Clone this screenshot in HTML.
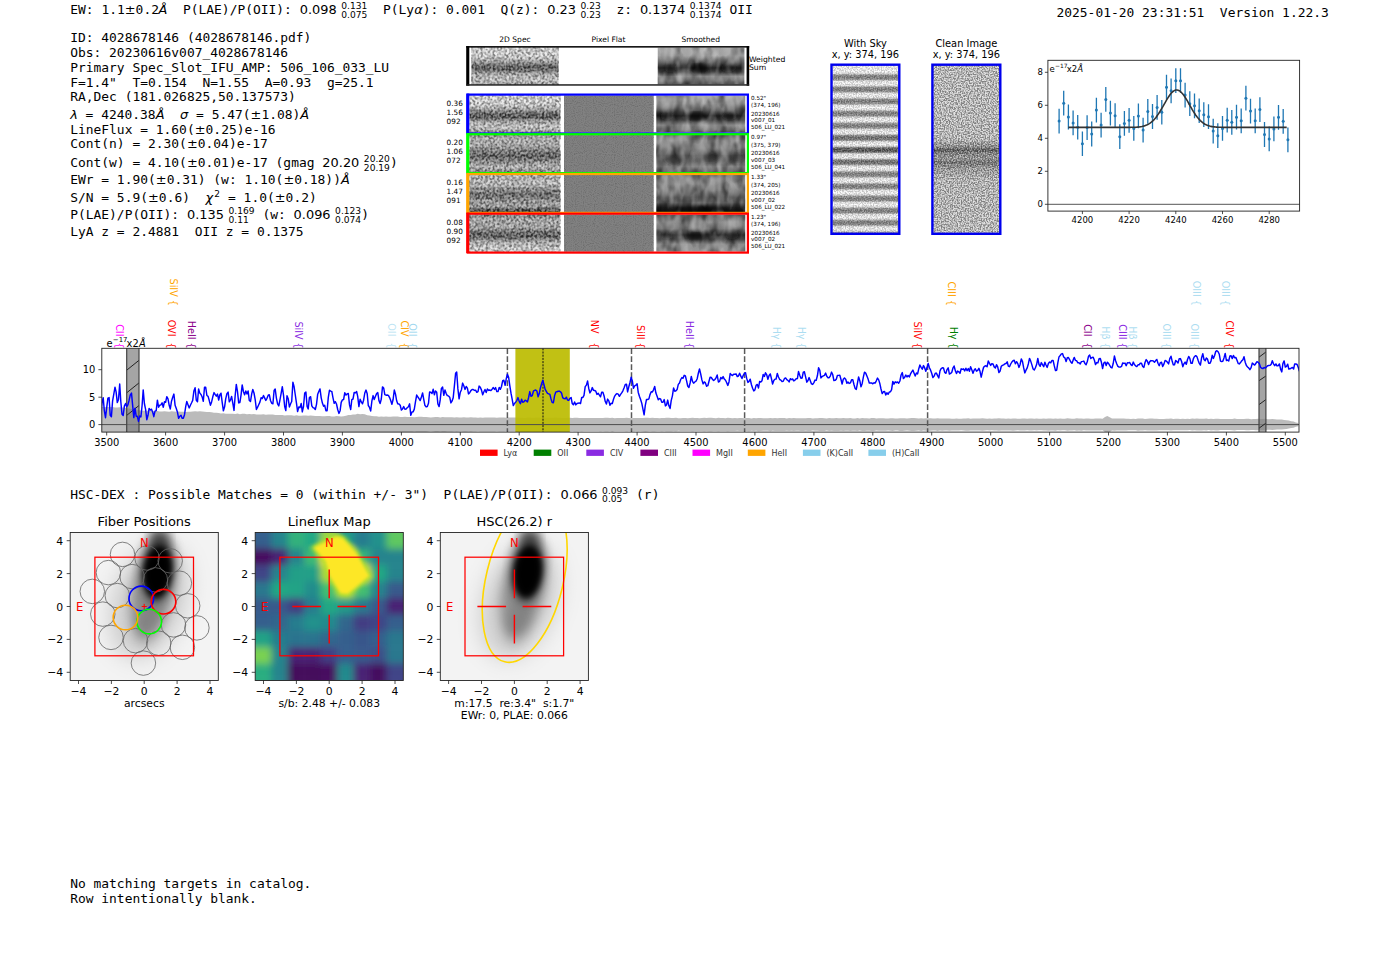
<!DOCTYPE html>
<html><head><meta charset="utf-8"><title>HETDEX detection 4028678146</title>
<style>
html,body{margin:0;padding:0;background:#fff;}
svg{display:block}
text{white-space:pre}
.m{font-family:"DejaVu Sans Mono","Liberation Mono",monospace;font-size:12.93px}
.s{font-family:"DejaVu Sans","Liberation Sans",sans-serif}
</style></head><body>
<svg width="1400" height="953" viewBox="0 0 1400 953">
<defs>
<filter id="nz" x="0" y="0" width="100%" height="100%" color-interpolation-filters="sRGB">
  <feTurbulence type="fractalNoise" baseFrequency="0.42 0.4" numOctaves="1" seed="7" result="t"/>
  <feColorMatrix in="t" type="matrix" values="0 0 0 0 0  0 0 0 0 0  0 0 0 0 0  2.6 2.6 0 0 -2.1"/>
</filter>
<filter id="nzw" x="0" y="0" width="100%" height="100%" color-interpolation-filters="sRGB">
  <feTurbulence type="fractalNoise" baseFrequency="0.45 0.42" numOctaves="1" seed="11" result="t"/>
  <feColorMatrix in="t" type="matrix" values="0 0 0 0 1  0 0 0 0 1  0 0 0 0 1  2.6 2.6 0 0 -2.1"/>
</filter>
<filter id="nzf" x="0" y="0" width="100%" height="100%" color-interpolation-filters="sRGB">
  <feTurbulence type="fractalNoise" baseFrequency="0.9" numOctaves="1" seed="3" result="t"/>
  <feColorMatrix in="t" type="matrix" values="0 0 0 0 0  0 0 0 0 0  0 0 0 0 0  0.3 0.3 0 0 -0.27"/>
</filter>
<filter id="nzs" x="0" y="0" width="100%" height="100%" color-interpolation-filters="sRGB">
  <feTurbulence type="fractalNoise" baseFrequency="0.11 0.07" numOctaves="2" seed="5" result="t"/>
  <feColorMatrix in="t" type="matrix" values="0 0 0 0 0  0 0 0 0 0  0 0 0 0 0  2.4 0 0 0 -0.95"/>
</filter>
<filter id="nzsw" x="0" y="0" width="100%" height="100%" color-interpolation-filters="sRGB">
  <feTurbulence type="fractalNoise" baseFrequency="0.12 0.06" numOctaves="2" seed="23" result="t"/>
  <feColorMatrix in="t" type="matrix" values="0 0 0 0 1  0 0 0 0 1  0 0 0 0 1  0 2.4 0 0 -1.1"/>
</filter>
<filter id="nf" x="0" y="0" width="100%" height="100%" color-interpolation-filters="sRGB">
  <feTurbulence type="fractalNoise" baseFrequency="0.75 0.7" numOctaves="1" seed="17" result="t"/>
  <feColorMatrix in="t" type="matrix" values="0 0 0 0 0  0 0 0 0 0  0 0 0 0 0  3 3 0 0 -2.55"/>
</filter>
<filter id="nfw" x="0" y="0" width="100%" height="100%" color-interpolation-filters="sRGB">
  <feTurbulence type="fractalNoise" baseFrequency="0.7 0.75" numOctaves="1" seed="29" result="t"/>
  <feColorMatrix in="t" type="matrix" values="0 0 0 0 1  0 0 0 0 1  0 0 0 0 1  3 3 0 0 -2.55"/>
</filter>
<filter id="b1" x="-10%" y="-10%" width="120%" height="120%"><feGaussianBlur stdDeviation="1.6"/></filter>
<filter id="b2" x="-10%" y="-10%" width="120%" height="120%"><feGaussianBlur stdDeviation="2.4 1.8"/></filter>
<linearGradient id="gs0" x1="0" y1="0" x2="0" y2="1"><stop offset="0.000" stop-color="#ebebeb"/><stop offset="0.250" stop-color="#e1e1e1"/><stop offset="0.380" stop-color="#aaaaaa"/><stop offset="0.500" stop-color="#4b4b4b"/><stop offset="0.600" stop-color="#505050"/><stop offset="0.700" stop-color="#aaaaaa"/><stop offset="0.850" stop-color="#d7d7d7"/><stop offset="0.950" stop-color="#bebebe"/><stop offset="1.000" stop-color="#969696"/></linearGradient><linearGradient id="gm0" x1="0" y1="0" x2="0" y2="1"><stop offset="0.000" stop-color="#a5a5a5"/><stop offset="0.220" stop-color="#a0a0a0"/><stop offset="0.400" stop-color="#646464"/><stop offset="0.550" stop-color="#232323"/><stop offset="0.660" stop-color="#3c3c3c"/><stop offset="0.780" stop-color="#878787"/><stop offset="0.900" stop-color="#737373"/><stop offset="1.000" stop-color="#555555"/></linearGradient><clipPath id="cs0"><rect x="657.5" y="47.5" width="87.10" height="37.10"/></clipPath><linearGradient id="gs1" x1="0" y1="0" x2="0" y2="1"><stop offset="0.000" stop-color="#ebebeb"/><stop offset="0.250" stop-color="#e1e1e1"/><stop offset="0.380" stop-color="#aaaaaa"/><stop offset="0.500" stop-color="#464646"/><stop offset="0.600" stop-color="#4b4b4b"/><stop offset="0.700" stop-color="#aaaaaa"/><stop offset="0.850" stop-color="#d7d7d7"/><stop offset="0.950" stop-color="#b4b4b4"/><stop offset="1.000" stop-color="#8c8c8c"/></linearGradient><linearGradient id="gm1" x1="0" y1="0" x2="0" y2="1"><stop offset="0.000" stop-color="#a0a0a0"/><stop offset="0.220" stop-color="#9b9b9b"/><stop offset="0.400" stop-color="#646464"/><stop offset="0.550" stop-color="#232323"/><stop offset="0.660" stop-color="#3c3c3c"/><stop offset="0.800" stop-color="#878787"/><stop offset="0.920" stop-color="#787878"/><stop offset="1.000" stop-color="#5f5f5f"/></linearGradient><clipPath id="cs1"><rect x="656.2" y="95.39999999999999" width="89.20" height="37.20"/></clipPath><linearGradient id="gs2" x1="0" y1="0" x2="0" y2="1"><stop offset="0.000" stop-color="#969696"/><stop offset="0.120" stop-color="#bebebe"/><stop offset="0.300" stop-color="#aaaaaa"/><stop offset="0.450" stop-color="#6e6e6e"/><stop offset="0.580" stop-color="#464646"/><stop offset="0.700" stop-color="#828282"/><stop offset="0.850" stop-color="#c8c8c8"/><stop offset="0.950" stop-color="#969696"/><stop offset="1.000" stop-color="#828282"/></linearGradient><linearGradient id="gm2" x1="0" y1="0" x2="0" y2="1"><stop offset="0.000" stop-color="#6e6e6e"/><stop offset="0.150" stop-color="#8c8c8c"/><stop offset="0.350" stop-color="#7d7d7d"/><stop offset="0.550" stop-color="#464646"/><stop offset="0.700" stop-color="#5a5a5a"/><stop offset="0.850" stop-color="#878787"/><stop offset="1.000" stop-color="#6e6e6e"/></linearGradient><clipPath id="cs2"><rect x="656.2" y="135.0" width="89.20" height="37.20"/></clipPath><linearGradient id="gs3" x1="0" y1="0" x2="0" y2="1"><stop offset="0.000" stop-color="#bebebe"/><stop offset="0.250" stop-color="#c8c8c8"/><stop offset="0.420" stop-color="#828282"/><stop offset="0.550" stop-color="#5a5a5a"/><stop offset="0.700" stop-color="#969696"/><stop offset="0.850" stop-color="#aaaaaa"/><stop offset="0.930" stop-color="#3c3c3c"/><stop offset="1.000" stop-color="#282828"/></linearGradient><linearGradient id="gm3" x1="0" y1="0" x2="0" y2="1"><stop offset="0.000" stop-color="#878787"/><stop offset="0.250" stop-color="#8c8c8c"/><stop offset="0.450" stop-color="#6e6e6e"/><stop offset="0.600" stop-color="#555555"/><stop offset="0.750" stop-color="#646464"/><stop offset="0.880" stop-color="#282828"/><stop offset="1.000" stop-color="#0f0f0f"/></linearGradient><clipPath id="cs3"><rect x="656.2" y="174.8" width="89.20" height="37.20"/></clipPath><linearGradient id="gs4" x1="0" y1="0" x2="0" y2="1"><stop offset="0.000" stop-color="#787878"/><stop offset="0.150" stop-color="#b4b4b4"/><stop offset="0.350" stop-color="#aaaaaa"/><stop offset="0.500" stop-color="#505050"/><stop offset="0.600" stop-color="#4b4b4b"/><stop offset="0.720" stop-color="#aaaaaa"/><stop offset="0.900" stop-color="#e1e1e1"/><stop offset="1.000" stop-color="#d7d7d7"/></linearGradient><linearGradient id="gm4" x1="0" y1="0" x2="0" y2="1"><stop offset="0.000" stop-color="#5f5f5f"/><stop offset="0.200" stop-color="#8c8c8c"/><stop offset="0.380" stop-color="#787878"/><stop offset="0.550" stop-color="#2d2d2d"/><stop offset="0.660" stop-color="#414141"/><stop offset="0.800" stop-color="#8c8c8c"/><stop offset="1.000" stop-color="#969696"/></linearGradient><clipPath id="cs4"><rect x="656.2" y="214.5" width="89.20" height="37.20"/></clipPath><linearGradient id="gsky" x1="0" y1="0" x2="0" y2="1"><stop offset="0.000" stop-color="#f5f5f5"/><stop offset="0.034" stop-color="#fcfcfc"/><stop offset="0.047" stop-color="#ebebeb"/><stop offset="0.058" stop-color="#8a8a8a"/><stop offset="0.070" stop-color="#767676"/><stop offset="0.082" stop-color="#8a8a8a"/><stop offset="0.093" stop-color="#ebebeb"/><stop offset="0.106" stop-color="#fcfcfc"/><stop offset="0.119" stop-color="#ebebeb"/><stop offset="0.131" stop-color="#8a8a8a"/><stop offset="0.142" stop-color="#767676"/><stop offset="0.154" stop-color="#8a8a8a"/><stop offset="0.166" stop-color="#ebebeb"/><stop offset="0.179" stop-color="#fcfcfc"/><stop offset="0.191" stop-color="#ebebeb"/><stop offset="0.203" stop-color="#8a8a8a"/><stop offset="0.215" stop-color="#767676"/><stop offset="0.226" stop-color="#8a8a8a"/><stop offset="0.238" stop-color="#ebebeb"/><stop offset="0.251" stop-color="#fcfcfc"/><stop offset="0.264" stop-color="#ebebeb"/><stop offset="0.276" stop-color="#8a8a8a"/><stop offset="0.287" stop-color="#767676"/><stop offset="0.299" stop-color="#8a8a8a"/><stop offset="0.311" stop-color="#ebebeb"/><stop offset="0.323" stop-color="#fcfcfc"/><stop offset="0.336" stop-color="#ebebeb"/><stop offset="0.348" stop-color="#8a8a8a"/><stop offset="0.360" stop-color="#767676"/><stop offset="0.371" stop-color="#8a8a8a"/><stop offset="0.383" stop-color="#ebebeb"/><stop offset="0.396" stop-color="#fcfcfc"/><stop offset="0.409" stop-color="#ebebeb"/><stop offset="0.420" stop-color="#787878"/><stop offset="0.432" stop-color="#646464"/><stop offset="0.444" stop-color="#787878"/><stop offset="0.455" stop-color="#ebebeb"/><stop offset="0.468" stop-color="#fcfcfc"/><stop offset="0.481" stop-color="#ebebeb"/><stop offset="0.493" stop-color="#5a5a5a"/><stop offset="0.504" stop-color="#464646"/><stop offset="0.516" stop-color="#5a5a5a"/><stop offset="0.528" stop-color="#ebebeb"/><stop offset="0.541" stop-color="#fcfcfc"/><stop offset="0.554" stop-color="#ebebeb"/><stop offset="0.565" stop-color="#787878"/><stop offset="0.577" stop-color="#646464"/><stop offset="0.589" stop-color="#787878"/><stop offset="0.600" stop-color="#ebebeb"/><stop offset="0.613" stop-color="#fcfcfc"/><stop offset="0.626" stop-color="#ebebeb"/><stop offset="0.638" stop-color="#8a8a8a"/><stop offset="0.649" stop-color="#767676"/><stop offset="0.661" stop-color="#8a8a8a"/><stop offset="0.673" stop-color="#ebebeb"/><stop offset="0.686" stop-color="#fcfcfc"/><stop offset="0.698" stop-color="#ebebeb"/><stop offset="0.710" stop-color="#8a8a8a"/><stop offset="0.722" stop-color="#767676"/><stop offset="0.733" stop-color="#8a8a8a"/><stop offset="0.745" stop-color="#ebebeb"/><stop offset="0.758" stop-color="#fcfcfc"/><stop offset="0.771" stop-color="#ebebeb"/><stop offset="0.783" stop-color="#8a8a8a"/><stop offset="0.794" stop-color="#767676"/><stop offset="0.806" stop-color="#8a8a8a"/><stop offset="0.817" stop-color="#ebebeb"/><stop offset="0.830" stop-color="#fcfcfc"/><stop offset="0.843" stop-color="#ebebeb"/><stop offset="0.855" stop-color="#8a8a8a"/><stop offset="0.867" stop-color="#767676"/><stop offset="0.878" stop-color="#8a8a8a"/><stop offset="0.890" stop-color="#ebebeb"/><stop offset="0.903" stop-color="#fcfcfc"/><stop offset="0.916" stop-color="#ebebeb"/><stop offset="0.927" stop-color="#8a8a8a"/><stop offset="0.939" stop-color="#767676"/><stop offset="0.951" stop-color="#8a8a8a"/><stop offset="0.962" stop-color="#ebebeb"/><stop offset="0.975" stop-color="#fcfcfc"/><stop offset="0.988" stop-color="#ebebeb"/><stop offset="1.000" stop-color="#8a8a8a"/><stop offset="1.000" stop-color="#767676"/><stop offset="1.000" stop-color="#8a8a8a"/><stop offset="1.000" stop-color="#ebebeb"/></linearGradient><linearGradient id="gcl" x1="0" y1="0" x2="0" y2="1"><stop offset="0.000" stop-color="#d4d4d4"/><stop offset="0.440" stop-color="#d2d2d2"/><stop offset="0.485" stop-color="#969696"/><stop offset="0.505" stop-color="#555555"/><stop offset="0.525" stop-color="#8c8c8c"/><stop offset="0.555" stop-color="#a0a0a0"/><stop offset="0.580" stop-color="#737373"/><stop offset="0.610" stop-color="#a5a5a5"/><stop offset="0.680" stop-color="#cdcdcd"/><stop offset="1.000" stop-color="#d4d4d4"/></linearGradient><clipPath id="cm"><rect x="101.8" y="348.3" width="1197.2" height="83.8"/></clipPath><filter id="gb" x="-30%" y="-30%" width="160%" height="160%"><feGaussianBlur stdDeviation="5.5"/></filter><filter id="gb2" x="-30%" y="-30%" width="160%" height="160%"><feGaussianBlur stdDeviation="11"/></filter><filter id="gb3" x="-30%" y="-30%" width="160%" height="160%"><feGaussianBlur stdDeviation="3.2"/></filter><filter id="vb" x="-30%" y="-30%" width="160%" height="160%"><feGaussianBlur stdDeviation="3.6"/></filter><clipPath id="cg1"><rect x="70.2" y="532.5" width="148.1" height="148"/></clipPath><clipPath id="cv"><rect x="255.2" y="532.5" width="148.1" height="148"/></clipPath><clipPath id="cg3"><rect x="440.3" y="532.5" width="148.1" height="148"/></clipPath></defs>
<rect width="1400" height="953" fill="#fff"/>
<text class="m" x="70.30" y="13.90" >EW: 1.1</text>
<text class="s" x="124.79" y="13.90" font-size="12.93" >±</text>
<text class="m" x="135.62" y="13.90" >0.2</text>
<text class="s" x="158.57" y="13.90" font-size="12.93" font-style="italic" >Å</text>
<text class="m" x="167.42" y="13.90" >  P(LAE)/P(OII): </text>
<text class="s" x="299.75" y="13.90" font-size="12.93" >0.098</text>
<text class="s" x="341.26" y="8.90" font-size="9.1" >0.131</text>
<text class="s" x="341.26" y="17.50" font-size="9.1" >0.075</text>
<text class="m" x="367.47" y="13.90" >  P(Ly</text>
<text class="s" x="414.18" y="13.90" font-size="12.93" font-style="italic" >α</text>
<text class="m" x="422.70" y="13.90" >): 0.001  Q(z): </text>
<text class="s" x="547.24" y="13.90" font-size="12.93" >0.23</text>
<text class="s" x="580.53" y="8.90" font-size="9.1" >0.23</text>
<text class="s" x="580.53" y="17.50" font-size="9.1" >0.23</text>
<text class="m" x="600.98" y="13.90" >  z: </text>
<text class="s" x="639.90" y="13.90" font-size="12.93" >0.1374</text>
<text class="s" x="689.65" y="8.90" font-size="9.1" >0.1374</text>
<text class="s" x="689.65" y="17.50" font-size="9.1" >0.1374</text>
<text class="m" x="721.61" y="13.90" > OII</text>
<text class="m" x="1056.50" y="16.50" >2025-01-20 23:31:51  Version 1.22.3</text>
<text class="m" x="70.20" y="42.40" >ID: 4028678146 (4028678146.pdf)</text>
<text class="m" x="70.20" y="57.00" >Obs: 20230616v007_4028678146</text>
<text class="m" x="70.20" y="71.80" >Primary Spec_Slot_IFU_AMP: 506_106_033_LU</text>
<text class="m" x="70.20" y="86.60" >F=1.4"  T=0.154  N=1.55  A=0.93  g=25.1</text>
<text class="m" x="70.20" y="101.30" >RA,Dec (181.026825,50.137573)</text>
<text class="s" x="70.20" y="118.60" font-size="12.93" font-style="italic" >λ</text>
<text class="m" x="77.85" y="118.60" > = 4240.38</text>
<text class="s" x="155.69" y="118.60" font-size="12.93" font-style="italic" >Å</text>
<text class="m" x="164.54" y="118.60" >  </text>
<text class="s" x="180.11" y="118.60" font-size="12.93" font-style="italic" >σ</text>
<text class="m" x="188.30" y="118.60" > = 5.47(</text>
<text class="s" x="250.57" y="118.60" font-size="12.93" >±</text>
<text class="m" x="261.41" y="118.60" >1.08)</text>
<text class="s" x="300.33" y="118.60" font-size="12.93" font-style="italic" >Å</text>
<text class="m" x="70.20" y="133.80" >LineFlux = 1.60(</text>
<text class="s" x="194.74" y="133.80" font-size="12.93" >±</text>
<text class="m" x="205.58" y="133.80" >0.25)e-16</text>
<text class="m" x="70.20" y="148.30" >Cont(n) = 2.30(</text>
<text class="s" x="186.96" y="148.30" font-size="12.93" >±</text>
<text class="m" x="197.79" y="148.30" >0.04)e-17</text>
<text class="m" x="70.20" y="167.00" >Cont(w) = 4.10(</text>
<text class="s" x="186.96" y="167.00" font-size="12.93" >±</text>
<text class="m" x="197.79" y="167.00" >0.01)e-17 (gmag </text>
<text class="s" x="322.34" y="167.00" font-size="12.93" >20.20</text>
<text class="s" x="363.85" y="162.00" font-size="9.1" >20.20</text>
<text class="s" x="363.85" y="170.60" font-size="9.1" >20.19</text>
<text class="m" x="390.06" y="167.00" >)</text>
<text class="m" x="70.20" y="184.30" >EWr = 1.90(</text>
<text class="s" x="155.82" y="184.30" font-size="12.93" >±</text>
<text class="m" x="166.66" y="184.30" >0.31) (w: 1.10(</text>
<text class="s" x="283.42" y="184.30" font-size="12.93" >±</text>
<text class="m" x="294.25" y="184.30" >0.18))</text>
<text class="s" x="340.96" y="184.30" font-size="12.93" font-style="italic" >Å</text>
<text class="m" x="70.20" y="202.00" >S/N = 5.9(</text>
<text class="s" x="148.04" y="202.00" font-size="12.93" >±</text>
<text class="m" x="158.87" y="202.00" >0.6)  </text>
<text class="s" x="205.58" y="202.00" font-size="12.93" font-style="italic" >χ</text>
<text class="s" x="214.13" y="196.80" font-size="9.05" >2</text>
<text class="m" x="220.29" y="202.00" > = 1.0(</text>
<text class="s" x="274.78" y="202.00" font-size="12.93" >±</text>
<text class="m" x="285.61" y="202.00" >0.2)</text>
<text class="m" x="70.20" y="219.30" >P(LAE)/P(OII): </text>
<text class="s" x="186.96" y="219.30" font-size="12.93" >0.135</text>
<text class="s" x="228.48" y="214.30" font-size="9.1" >0.169</text>
<text class="s" x="228.48" y="222.90" font-size="9.1" >0.11</text>
<text class="m" x="254.68" y="219.30" > (w: </text>
<text class="s" x="293.60" y="219.30" font-size="12.93" >0.096</text>
<text class="s" x="335.12" y="214.30" font-size="9.1" >0.123</text>
<text class="s" x="335.12" y="222.90" font-size="9.1" >0.074</text>
<text class="m" x="361.33" y="219.30" >)</text>
<text class="m" x="70.20" y="236.30" >LyA z = 2.4881  OII z = 0.1375</text>
<rect x="471.5" y="47.5" width="87.00" height="37.10" fill="url(#gs0)"/>
<rect x="471.5" y="47.5" width="87.00" height="37.10" filter="url(#nz)" opacity="0.45"/>
<rect x="471.5" y="47.5" width="87.00" height="37.10" filter="url(#nzw)" opacity="0.4"/>
<g clip-path="url(#cs0)">
<rect x="657.5" y="47.5" width="87.10" height="37.10" fill="url(#gm0)"/>
<rect x="657.5" y="47.5" width="87.10" height="37.10" filter="url(#nzs)" opacity="0.5"/>
<rect x="657.5" y="47.5" width="87.10" height="37.10" filter="url(#nzsw)" opacity="0.35"/>
<g filter="url(#b2)">
<ellipse cx="668.0" cy="54.9" rx="7.0" ry="7.4" fill="#bebebe" opacity="0.44"/>
<ellipse cx="696.7" cy="53.1" rx="8.7" ry="7.4" fill="#bebebe" opacity="0.39"/>
<ellipse cx="731.5" cy="54.9" rx="7.0" ry="9.3" fill="#bebebe" opacity="0.44"/>
<ellipse cx="699.3" cy="67.9" rx="7.8" ry="5.2" fill="#000000" opacity="0.68"/>
<ellipse cx="670.6" cy="67.9" rx="6.1" ry="4.5" fill="#141414" opacity="0.48"/>
<ellipse cx="728.9" cy="67.9" rx="7.0" ry="4.5" fill="#141414" opacity="0.48"/>
<ellipse cx="683.6" cy="77.2" rx="7.0" ry="4.5" fill="#bebebe" opacity="0.33"/>
<ellipse cx="714.1" cy="76.4" rx="5.2" ry="4.5" fill="#bebebe" opacity="0.28"/>
</g></g>
<rect x="466.2" y="46.1" width="3.1" height="39.6" fill="#000"/>
<rect x="746.6" y="46.1" width="2.6" height="39.6" fill="#000"/>
<rect x="466.2" y="46.1" width="283.00000000000006" height="1.5" fill="#000"/>
<rect x="466.2" y="84.2" width="283.00000000000006" height="1.5" fill="#222"/>
<rect x="469.4" y="95.39999999999999" width="90.80" height="37.20" fill="url(#gs1)"/>
<rect x="469.4" y="95.39999999999999" width="90.80" height="37.20" filter="url(#nz)" opacity="0.45"/>
<rect x="469.4" y="95.39999999999999" width="90.80" height="37.20" filter="url(#nzw)" opacity="0.4"/>
<rect x="564" y="95.4" width="89.7" height="37.2" fill="#818181"/>
<rect x="564" y="95.4" width="89.7" height="37.2" filter="url(#nzf)"/>
<g clip-path="url(#cs1)">
<rect x="656.2" y="95.39999999999999" width="89.20" height="37.20" fill="url(#gm1)"/>
<rect x="656.2" y="95.39999999999999" width="89.20" height="37.20" filter="url(#nzs)" opacity="0.5"/>
<rect x="656.2" y="95.39999999999999" width="89.20" height="37.20" filter="url(#nzsw)" opacity="0.35"/>
<g filter="url(#b2)">
<ellipse cx="666.9" cy="102.8" rx="7.1" ry="7.4" fill="#bebebe" opacity="0.44"/>
<ellipse cx="696.3" cy="101.0" rx="8.9" ry="7.4" fill="#bebebe" opacity="0.39"/>
<ellipse cx="732.0" cy="102.8" rx="7.1" ry="9.3" fill="#bebebe" opacity="0.44"/>
<ellipse cx="696.3" cy="115.9" rx="8.0" ry="5.2" fill="#000000" opacity="0.64"/>
<ellipse cx="666.9" cy="115.9" rx="6.2" ry="4.5" fill="#141414" opacity="0.48"/>
<ellipse cx="729.3" cy="115.9" rx="7.1" ry="4.5" fill="#141414" opacity="0.48"/>
<ellipse cx="683.0" cy="127.0" rx="6.2" ry="5.6" fill="#bebebe" opacity="0.33"/>
<ellipse cx="711.5" cy="127.0" rx="5.4" ry="5.6" fill="#bebebe" opacity="0.28"/>
</g></g>
<rect x="469.4" y="135.0" width="90.80" height="37.20" fill="url(#gs2)"/>
<rect x="469.4" y="135.0" width="90.80" height="37.20" filter="url(#nz)" opacity="0.45"/>
<rect x="469.4" y="135.0" width="90.80" height="37.20" filter="url(#nzw)" opacity="0.4"/>
<rect x="564" y="135.0" width="89.7" height="37.2" fill="#818181"/>
<rect x="564" y="135.0" width="89.7" height="37.2" filter="url(#nzf)"/>
<g clip-path="url(#cs2)">
<rect x="656.2" y="135.0" width="89.20" height="37.20" fill="url(#gm2)"/>
<rect x="656.2" y="135.0" width="89.20" height="37.20" filter="url(#nzs)" opacity="0.5"/>
<rect x="656.2" y="135.0" width="89.20" height="37.20" filter="url(#nzsw)" opacity="0.35"/>
<g filter="url(#b2)">
<ellipse cx="666.9" cy="146.2" rx="4.5" ry="11.2" fill="#bebebe" opacity="0.39"/>
<ellipse cx="683.0" cy="146.2" rx="4.5" ry="13.0" fill="#bebebe" opacity="0.39"/>
<ellipse cx="700.8" cy="148.0" rx="4.5" ry="11.2" fill="#bebebe" opacity="0.39"/>
<ellipse cx="725.8" cy="146.2" rx="5.4" ry="11.2" fill="#bebebe" opacity="0.39"/>
<ellipse cx="691.9" cy="144.3" rx="1.8" ry="9.3" fill="#282828" opacity="0.56"/>
<ellipse cx="674.0" cy="159.2" rx="8.9" ry="5.6" fill="#1e1e1e" opacity="0.48"/>
<ellipse cx="709.7" cy="157.3" rx="8.9" ry="4.5" fill="#282828" opacity="0.48"/>
<ellipse cx="736.5" cy="157.3" rx="5.4" ry="5.6" fill="#282828" opacity="0.48"/>
</g></g>
<rect x="469.4" y="174.8" width="90.80" height="37.20" fill="url(#gs3)"/>
<rect x="469.4" y="174.8" width="90.80" height="37.20" filter="url(#nz)" opacity="0.45"/>
<rect x="469.4" y="174.8" width="90.80" height="37.20" filter="url(#nzw)" opacity="0.4"/>
<rect x="564" y="174.8" width="89.7" height="37.2" fill="#818181"/>
<rect x="564" y="174.8" width="89.7" height="37.2" filter="url(#nzf)"/>
<g clip-path="url(#cs3)">
<rect x="656.2" y="174.8" width="89.20" height="37.20" fill="url(#gm3)"/>
<rect x="656.2" y="174.8" width="89.20" height="37.20" filter="url(#nzs)" opacity="0.5"/>
<rect x="656.2" y="174.8" width="89.20" height="37.20" filter="url(#nzsw)" opacity="0.35"/>
<g filter="url(#b2)">
<ellipse cx="665.1" cy="186.0" rx="4.5" ry="11.2" fill="#bebebe" opacity="0.33"/>
<ellipse cx="687.4" cy="186.0" rx="5.4" ry="11.2" fill="#bebebe" opacity="0.33"/>
<ellipse cx="711.5" cy="184.1" rx="5.4" ry="9.3" fill="#bebebe" opacity="0.33"/>
<ellipse cx="734.7" cy="186.0" rx="4.5" ry="11.2" fill="#bebebe" opacity="0.33"/>
<ellipse cx="700.8" cy="209.0" rx="26.8" ry="3.0" fill="#000000" opacity="0.56"/>
</g></g>
<rect x="469.4" y="214.5" width="90.80" height="37.20" fill="url(#gs4)"/>
<rect x="469.4" y="214.5" width="90.80" height="37.20" filter="url(#nz)" opacity="0.45"/>
<rect x="469.4" y="214.5" width="90.80" height="37.20" filter="url(#nzw)" opacity="0.4"/>
<rect x="564" y="214.5" width="89.7" height="37.2" fill="#818181"/>
<rect x="564" y="214.5" width="89.7" height="37.2" filter="url(#nzf)"/>
<g clip-path="url(#cs4)">
<rect x="656.2" y="214.5" width="89.20" height="37.20" fill="url(#gm4)"/>
<rect x="656.2" y="214.5" width="89.20" height="37.20" filter="url(#nzs)" opacity="0.5"/>
<rect x="656.2" y="214.5" width="89.20" height="37.20" filter="url(#nzsw)" opacity="0.35"/>
<g filter="url(#b2)">
<ellipse cx="669.6" cy="225.7" rx="6.2" ry="5.6" fill="#bebebe" opacity="0.39"/>
<ellipse cx="696.3" cy="223.8" rx="7.1" ry="5.6" fill="#bebebe" opacity="0.39"/>
<ellipse cx="729.3" cy="224.9" rx="6.2" ry="5.6" fill="#bebebe" opacity="0.39"/>
<ellipse cx="696.3" cy="235.7" rx="8.9" ry="4.5" fill="#000000" opacity="0.60"/>
<ellipse cx="732.0" cy="235.7" rx="6.2" ry="3.7" fill="#141414" opacity="0.48"/>
<ellipse cx="666.9" cy="235.7" rx="5.4" ry="3.7" fill="#1e1e1e" opacity="0.40"/>
<ellipse cx="683.0" cy="246.1" rx="7.1" ry="4.5" fill="#bebebe" opacity="0.33"/>
<ellipse cx="718.6" cy="246.1" rx="7.1" ry="4.5" fill="#bebebe" opacity="0.33"/>
</g></g>
<rect x="467.7" y="94.6" width="280.20000000000005" height="38.9" fill="none" stroke="#0000ff" stroke-width="2.2"/>
<rect x="466.2" y="93.6" width="3.1" height="40.3" fill="#0000ff"/>
<rect x="467.7" y="134.2" width="280.20000000000005" height="38.9" fill="none" stroke="#00ff00" stroke-width="2.2"/>
<rect x="466.2" y="133.2" width="3.1" height="40.3" fill="#00ff00"/>
<rect x="467.7" y="174.0" width="280.20000000000005" height="38.9" fill="none" stroke="#ffa500" stroke-width="2.2"/>
<rect x="466.2" y="173.0" width="3.1" height="40.3" fill="#ffa500"/>
<rect x="467.7" y="213.7" width="280.20000000000005" height="38.9" fill="none" stroke="#ff0000" stroke-width="2.2"/>
<rect x="466.2" y="212.7" width="3.1" height="40.3" fill="#ff0000"/>
<text class="s" x="515.00" y="41.60" font-size="7.55" text-anchor="middle" >2D Spec</text>
<text class="s" x="608.50" y="41.60" font-size="7.55" text-anchor="middle" >Pixel Flat</text>
<text class="s" x="700.70" y="41.60" font-size="7.55" text-anchor="middle" >Smoothed</text>
<text class="s" x="748.90" y="61.60" font-size="7.7" >Weighted</text>
<text class="s" x="748.90" y="69.90" font-size="7.7" >Sum</text>
<text class="s" x="446.60" y="105.70" font-size="7.3" >0.36</text>
<text class="s" x="446.60" y="114.60" font-size="7.3" >1.56</text>
<text class="s" x="446.60" y="123.50" font-size="7.3" >092</text>
<text class="s" x="446.60" y="145.30" font-size="7.3" >0.20</text>
<text class="s" x="446.60" y="154.20" font-size="7.3" >1.06</text>
<text class="s" x="446.60" y="163.10" font-size="7.3" >072</text>
<text class="s" x="446.60" y="185.10" font-size="7.3" >0.16</text>
<text class="s" x="446.60" y="194.00" font-size="7.3" >1.47</text>
<text class="s" x="446.60" y="202.90" font-size="7.3" >091</text>
<text class="s" x="446.60" y="224.80" font-size="7.3" >0.08</text>
<text class="s" x="446.60" y="233.70" font-size="7.3" >0.90</text>
<text class="s" x="446.60" y="242.60" font-size="7.3" >092</text>
<text class="s" x="751.00" y="99.60" font-size="5.65" >0.52"</text>
<text class="s" x="751.00" y="107.20" font-size="5.65" >(374, 196)</text>
<text class="s" x="751.00" y="115.50" font-size="5.65" >20230616</text>
<text class="s" x="751.00" y="122.20" font-size="5.65" >v007_01</text>
<text class="s" x="751.00" y="129.20" font-size="5.65" >506_LU_021</text>
<text class="s" x="751.00" y="139.20" font-size="5.65" >0.97"</text>
<text class="s" x="751.00" y="146.80" font-size="5.65" >(375, 379)</text>
<text class="s" x="751.00" y="155.10" font-size="5.65" >20230616</text>
<text class="s" x="751.00" y="161.80" font-size="5.65" >v007_03</text>
<text class="s" x="751.00" y="168.80" font-size="5.65" >506_LU_041</text>
<text class="s" x="751.00" y="179.00" font-size="5.65" >1.33"</text>
<text class="s" x="751.00" y="186.60" font-size="5.65" >(374, 205)</text>
<text class="s" x="751.00" y="194.90" font-size="5.65" >20230616</text>
<text class="s" x="751.00" y="201.60" font-size="5.65" >v007_02</text>
<text class="s" x="751.00" y="208.60" font-size="5.65" >506_LU_022</text>
<text class="s" x="751.00" y="218.70" font-size="5.65" >1.23"</text>
<text class="s" x="751.00" y="226.30" font-size="5.65" >(374, 196)</text>
<text class="s" x="751.00" y="234.60" font-size="5.65" >20230616</text>
<text class="s" x="751.00" y="241.30" font-size="5.65" >v007_02</text>
<text class="s" x="751.00" y="248.30" font-size="5.65" >506_LU_021</text>
<text class="s" x="865.40" y="47.40" font-size="9.85" text-anchor="middle" >With Sky</text>
<text class="s" x="865.40" y="58.40" font-size="9.85" text-anchor="middle" >x, y: 374, 196</text>
<text class="s" x="966.40" y="47.40" font-size="9.85" text-anchor="middle" >Clean Image</text>
<text class="s" x="966.40" y="58.40" font-size="9.85" text-anchor="middle" >x, y: 374, 196</text>
<rect x="832.3" y="65.5" width="66.2" height="167.5" fill="url(#gsky)"/>
<rect x="832.3" y="65.5" width="66.2" height="167.5" filter="url(#nfw)" opacity="0.3"/>
<rect x="832.3" y="65.5" width="66.2" height="167.5" filter="url(#nf)" opacity="0.2"/>
<rect x="831.5" y="64.7" width="67.8" height="169.1" fill="none" stroke="#0000ee" stroke-width="2.4"/>
<rect x="933.2" y="65.5" width="66.3" height="167.5" fill="url(#gcl)"/>
<rect x="933.2" y="65.5" width="66.3" height="167.5" filter="url(#nfw)" opacity="0.45"/>
<rect x="933.2" y="65.5" width="66.3" height="167.5" filter="url(#nf)" opacity="0.4"/>
<rect x="932.4000000000001" y="64.7" width="67.9" height="169.1" fill="none" stroke="#0000ee" stroke-width="2.4"/>
<line x1="1047.9" x2="1299.6" y1="204.3" y2="204.3" stroke="#555" stroke-width="1"/>
<path d="M1059.1 108.8V133.5M1063.7 90.8V115.5M1068.4 104.6V129.4M1073.1 110.6V135.3M1077.7 114.9V139.6M1082.4 131.4V156.1M1087.1 115.2V139.9M1091.7 121.6V146.4M1096.4 97.7V122.5M1101.1 112.7V137.5M1105.8 87.0V111.7M1110.4 100.7V125.4M1115.1 103.3V128.1M1119.8 124.3V149.0M1124.4 111.1V135.8M1129.1 107.9V132.7M1133.8 116.0V140.8M1138.4 103.5V128.2M1143.1 117.7V142.4M1147.8 99.0V123.8M1152.5 104.1V128.9M1157.1 95.1V119.8M1161.8 99.9V124.6M1166.5 74.8V99.5M1171.1 78.4V103.2M1175.8 68.3V93.1M1180.5 68.3V93.1M1185.1 82.7V107.4M1189.8 91.3V116.0M1194.5 93.4V118.2M1199.2 98.4V123.1M1203.8 102.3V127.1M1208.5 104.3V129.1M1213.2 118.7V143.4M1217.8 123.3V148.0M1222.5 116.0V140.8M1227.2 107.8V132.5M1231.8 109.9V134.7M1236.5 104.8V129.6M1241.2 108.4V133.2M1245.9 85.8V110.6M1250.5 98.7V123.5M1255.2 108.4V133.2M1259.9 97.2V122.0M1264.5 122.1V146.9M1269.2 126.6V151.3M1273.9 116.5V141.3M1278.5 105.0V129.7M1283.2 108.9V133.7M1287.9 127.4V152.2" stroke="#1f77b4" stroke-width="1.3" fill="none"/>
<circle cx="1059.1" cy="121.1" r="1.5" fill="#1f77b4"/>
<circle cx="1063.7" cy="103.2" r="1.5" fill="#1f77b4"/>
<circle cx="1068.4" cy="117.0" r="1.5" fill="#1f77b4"/>
<circle cx="1073.1" cy="123.0" r="1.5" fill="#1f77b4"/>
<circle cx="1077.7" cy="127.2" r="1.5" fill="#1f77b4"/>
<circle cx="1082.4" cy="143.7" r="1.5" fill="#1f77b4"/>
<circle cx="1087.1" cy="127.6" r="1.5" fill="#1f77b4"/>
<circle cx="1091.7" cy="134.0" r="1.5" fill="#1f77b4"/>
<circle cx="1096.4" cy="110.1" r="1.5" fill="#1f77b4"/>
<circle cx="1101.1" cy="125.1" r="1.5" fill="#1f77b4"/>
<circle cx="1105.8" cy="99.4" r="1.5" fill="#1f77b4"/>
<circle cx="1110.4" cy="113.1" r="1.5" fill="#1f77b4"/>
<circle cx="1115.1" cy="115.7" r="1.5" fill="#1f77b4"/>
<circle cx="1119.8" cy="136.7" r="1.5" fill="#1f77b4"/>
<circle cx="1124.4" cy="123.5" r="1.5" fill="#1f77b4"/>
<circle cx="1129.1" cy="120.3" r="1.5" fill="#1f77b4"/>
<circle cx="1133.8" cy="128.4" r="1.5" fill="#1f77b4"/>
<circle cx="1138.4" cy="115.9" r="1.5" fill="#1f77b4"/>
<circle cx="1143.1" cy="130.1" r="1.5" fill="#1f77b4"/>
<circle cx="1147.8" cy="111.4" r="1.5" fill="#1f77b4"/>
<circle cx="1152.5" cy="116.5" r="1.5" fill="#1f77b4"/>
<circle cx="1157.1" cy="107.4" r="1.5" fill="#1f77b4"/>
<circle cx="1161.8" cy="112.2" r="1.5" fill="#1f77b4"/>
<circle cx="1166.5" cy="87.2" r="1.5" fill="#1f77b4"/>
<circle cx="1171.1" cy="90.8" r="1.5" fill="#1f77b4"/>
<circle cx="1175.8" cy="80.7" r="1.5" fill="#1f77b4"/>
<circle cx="1180.5" cy="80.7" r="1.5" fill="#1f77b4"/>
<circle cx="1185.1" cy="95.1" r="1.5" fill="#1f77b4"/>
<circle cx="1189.8" cy="103.7" r="1.5" fill="#1f77b4"/>
<circle cx="1194.5" cy="105.8" r="1.5" fill="#1f77b4"/>
<circle cx="1199.2" cy="110.7" r="1.5" fill="#1f77b4"/>
<circle cx="1203.8" cy="114.7" r="1.5" fill="#1f77b4"/>
<circle cx="1208.5" cy="116.7" r="1.5" fill="#1f77b4"/>
<circle cx="1213.2" cy="131.0" r="1.5" fill="#1f77b4"/>
<circle cx="1217.8" cy="135.7" r="1.5" fill="#1f77b4"/>
<circle cx="1222.5" cy="128.4" r="1.5" fill="#1f77b4"/>
<circle cx="1227.2" cy="120.2" r="1.5" fill="#1f77b4"/>
<circle cx="1231.8" cy="122.3" r="1.5" fill="#1f77b4"/>
<circle cx="1236.5" cy="117.2" r="1.5" fill="#1f77b4"/>
<circle cx="1241.2" cy="120.8" r="1.5" fill="#1f77b4"/>
<circle cx="1245.9" cy="98.2" r="1.5" fill="#1f77b4"/>
<circle cx="1250.5" cy="111.1" r="1.5" fill="#1f77b4"/>
<circle cx="1255.2" cy="120.8" r="1.5" fill="#1f77b4"/>
<circle cx="1259.9" cy="109.6" r="1.5" fill="#1f77b4"/>
<circle cx="1264.5" cy="134.5" r="1.5" fill="#1f77b4"/>
<circle cx="1269.2" cy="139.0" r="1.5" fill="#1f77b4"/>
<circle cx="1273.9" cy="128.9" r="1.5" fill="#1f77b4"/>
<circle cx="1278.5" cy="117.3" r="1.5" fill="#1f77b4"/>
<circle cx="1283.2" cy="121.3" r="1.5" fill="#1f77b4"/>
<circle cx="1287.9" cy="139.8" r="1.5" fill="#1f77b4"/>
<polyline points="1068.4,127.4 1069.6,127.4 1070.7,127.4 1071.9,127.4 1073.1,127.4 1074.2,127.4 1075.4,127.4 1076.6,127.4 1077.7,127.4 1078.9,127.4 1080.1,127.4 1081.2,127.4 1082.4,127.4 1083.6,127.4 1084.7,127.4 1085.9,127.4 1087.1,127.4 1088.2,127.4 1089.4,127.4 1090.6,127.4 1091.7,127.4 1092.9,127.4 1094.1,127.4 1095.2,127.4 1096.4,127.4 1097.6,127.4 1098.7,127.4 1099.9,127.4 1101.1,127.4 1102.2,127.4 1103.4,127.4 1104.6,127.4 1105.8,127.4 1106.9,127.4 1108.1,127.4 1109.3,127.4 1110.4,127.4 1111.6,127.4 1112.8,127.4 1113.9,127.4 1115.1,127.4 1116.3,127.4 1117.4,127.4 1118.6,127.4 1119.8,127.4 1120.9,127.4 1122.1,127.4 1123.3,127.4 1124.4,127.4 1125.6,127.4 1126.8,127.4 1127.9,127.4 1129.1,127.4 1130.3,127.4 1131.4,127.3 1132.6,127.3 1133.8,127.3 1134.9,127.2 1136.1,127.2 1137.3,127.1 1138.4,127.0 1139.6,126.9 1140.8,126.7 1141.9,126.5 1143.1,126.2 1144.3,125.9 1145.4,125.5 1146.6,125.1 1147.8,124.5 1148.9,123.9 1150.1,123.1 1151.3,122.2 1152.5,121.2 1153.6,120.1 1154.8,118.8 1156.0,117.4 1157.1,115.8 1158.3,114.1 1159.5,112.3 1160.6,110.4 1161.8,108.4 1163.0,106.4 1164.1,104.3 1165.3,102.3 1166.5,100.2 1167.6,98.3 1168.8,96.5 1170.0,94.8 1171.1,93.3 1172.3,92.1 1173.5,91.1 1174.6,90.4 1175.8,90.0 1177.0,90.0 1178.1,90.2 1179.3,90.7 1180.5,91.6 1181.6,92.7 1182.8,94.0 1184.0,95.6 1185.1,97.3 1186.3,99.2 1187.5,101.2 1188.6,103.2 1189.8,105.3 1191.0,107.4 1192.1,109.4 1193.3,111.4 1194.5,113.2 1195.6,115.0 1196.8,116.6 1198.0,118.1 1199.2,119.4 1200.3,120.6 1201.5,121.7 1202.7,122.7 1203.8,123.5 1205.0,124.2 1206.2,124.8 1207.3,125.3 1208.5,125.7 1209.7,126.1 1210.8,126.4 1212.0,126.6 1213.2,126.8 1214.3,126.9 1215.5,127.0 1216.7,127.1 1217.8,127.2 1219.0,127.3 1220.2,127.3 1221.3,127.3 1222.5,127.3 1223.7,127.4 1224.8,127.4 1226.0,127.4 1227.2,127.4 1228.3,127.4 1229.5,127.4 1230.7,127.4 1231.8,127.4 1233.0,127.4 1234.2,127.4 1235.3,127.4 1236.5,127.4 1237.7,127.4 1238.8,127.4 1240.0,127.4 1241.2,127.4 1242.3,127.4 1243.5,127.4 1244.7,127.4 1245.9,127.4 1247.0,127.4 1248.2,127.4 1249.4,127.4 1250.5,127.4 1251.7,127.4 1252.9,127.4 1254.0,127.4 1255.2,127.4 1256.4,127.4 1257.5,127.4 1258.7,127.4 1259.9,127.4 1261.0,127.4 1262.2,127.4 1263.4,127.4 1264.5,127.4 1265.7,127.4 1266.9,127.4 1268.0,127.4 1269.2,127.4 1270.4,127.4 1271.5,127.4 1272.7,127.4 1273.9,127.4 1275.0,127.4 1276.2,127.4 1277.4,127.4 1278.5,127.4 1279.7,127.4 1280.9,127.4 1282.0,127.4 1283.2,127.4 1284.4,127.4 1285.5,127.4 1286.7,127.4" fill="none" stroke="#333" stroke-width="1.6"/>
<rect x="1047.9" y="60.3" width="251.7" height="150.8" fill="none" stroke="#222" stroke-width="0.9"/>
<line x1="1082.4" x2="1082.4" y1="211.1" y2="214.1" stroke="#222" stroke-width="0.8"/>
<text class="s" x="1082.40" y="223.30" font-size="8.5" text-anchor="middle" >4200</text>
<line x1="1129.1" x2="1129.1" y1="211.1" y2="214.1" stroke="#222" stroke-width="0.8"/>
<text class="s" x="1129.10" y="223.30" font-size="8.5" text-anchor="middle" >4220</text>
<line x1="1175.8" x2="1175.8" y1="211.1" y2="214.1" stroke="#222" stroke-width="0.8"/>
<text class="s" x="1175.80" y="223.30" font-size="8.5" text-anchor="middle" >4240</text>
<line x1="1222.5" x2="1222.5" y1="211.1" y2="214.1" stroke="#222" stroke-width="0.8"/>
<text class="s" x="1222.50" y="223.30" font-size="8.5" text-anchor="middle" >4260</text>
<line x1="1269.2" x2="1269.2" y1="211.1" y2="214.1" stroke="#222" stroke-width="0.8"/>
<text class="s" x="1269.20" y="223.30" font-size="8.5" text-anchor="middle" >4280</text>
<line x1="1044.9" x2="1047.9" y1="204.3" y2="204.3" stroke="#222" stroke-width="0.8"/>
<text class="s" x="1042.90" y="207.40" font-size="8.5" text-anchor="end" >0</text>
<line x1="1044.9" x2="1047.9" y1="171.3" y2="171.3" stroke="#222" stroke-width="0.8"/>
<text class="s" x="1042.90" y="174.40" font-size="8.5" text-anchor="end" >2</text>
<line x1="1044.9" x2="1047.9" y1="138.3" y2="138.3" stroke="#222" stroke-width="0.8"/>
<text class="s" x="1042.90" y="141.40" font-size="8.5" text-anchor="end" >4</text>
<line x1="1044.9" x2="1047.9" y1="105.3" y2="105.3" stroke="#222" stroke-width="0.8"/>
<text class="s" x="1042.90" y="108.40" font-size="8.5" text-anchor="end" >6</text>
<line x1="1044.9" x2="1047.9" y1="72.3" y2="72.3" stroke="#222" stroke-width="0.8"/>
<text class="s" x="1042.90" y="75.40" font-size="8.5" text-anchor="end" >8</text>
<text class="s" x="1049.60" y="71.50" font-size="8.5" >e</text>
<text class="s" x="1054.95" y="67.93" font-size="5.949999999999999" >−17</text>
<text class="s" x="1066.74" y="71.50" font-size="8.5" >x2</text>
<text class="s" x="1077.36" y="71.50" font-size="8.5" font-style="italic" >Å</text>
<text class="s" font-size="9.6" fill="#ff00ff" fill-opacity="1" text-anchor="end" transform="translate(116.0 348.7) rotate(90)">CII  {</text>
<text class="s" font-size="9.6" fill="#ff0000" fill-opacity="1" text-anchor="end" transform="translate(167.7 348.7) rotate(90)">OVI  {</text>
<text class="s" font-size="9.6" fill="#8b008b" fill-opacity="1" text-anchor="end" transform="translate(188.4 348.7) rotate(90)">HeII {</text>
<text class="s" font-size="9.6" fill="#8a2be2" fill-opacity="1" text-anchor="end" transform="translate(294.7 348.7) rotate(90)">SiIV {</text>
<text class="s" font-size="9.6" fill="#87ceeb" fill-opacity="0.55" text-anchor="end" transform="translate(387.8 348.7) rotate(90)">OII  {</text>
<text class="s" font-size="9.6" fill="#ffa500" fill-opacity="1" text-anchor="end" transform="translate(400.6 348.7) rotate(90)">CIV  {</text>
<text class="s" font-size="9.6" fill="#87ceeb" fill-opacity="0.8" text-anchor="end" transform="translate(409.4 348.7) rotate(90)">OII  {</text>
<text class="s" font-size="9.6" fill="#ff0000" fill-opacity="1" text-anchor="end" transform="translate(591.2 348.7) rotate(90)">NV   {</text>
<text class="s" font-size="9.6" fill="#ff0000" fill-opacity="1" text-anchor="end" transform="translate(637.3 348.7) rotate(90)">SiII {</text>
<text class="s" font-size="9.6" fill="#8a2be2" fill-opacity="1" text-anchor="end" transform="translate(685.9 348.7) rotate(90)">HeII {</text>
<text class="s" font-size="9.6" fill="#87ceeb" fill-opacity="0.7" text-anchor="end" transform="translate(773.4 348.7) rotate(90)">Hγ {</text>
<text class="s" font-size="9.6" fill="#87ceeb" fill-opacity="0.7" text-anchor="end" transform="translate(797.7 348.7) rotate(90)">Hγ {</text>
<text class="s" font-size="9.6" fill="#ff0000" fill-opacity="1" text-anchor="end" transform="translate(914.0 348.7) rotate(90)">SiIV {</text>
<text class="s" font-size="9.6" fill="#008000" fill-opacity="1" text-anchor="end" transform="translate(950.1 348.7) rotate(90)">Hγ {</text>
<text class="s" font-size="9.6" fill="#8b008b" fill-opacity="1" text-anchor="end" transform="translate(1083.5 348.7) rotate(90)">CII  {</text>
<text class="s" font-size="9.6" fill="#87ceeb" fill-opacity="0.7" text-anchor="end" transform="translate(1102.1 348.7) rotate(90)">Hβ {</text>
<text class="s" font-size="9.6" fill="#8a2be2" fill-opacity="1" text-anchor="end" transform="translate(1119.0 348.7) rotate(90)">CIII {</text>
<text class="s" font-size="9.6" fill="#87ceeb" fill-opacity="0.7" text-anchor="end" transform="translate(1129.0 348.7) rotate(90)">Hβ {</text>
<text class="s" font-size="9.6" fill="#87ceeb" fill-opacity="0.7" text-anchor="end" transform="translate(1163.2 348.7) rotate(90)">OIII {</text>
<text class="s" font-size="9.6" fill="#87ceeb" fill-opacity="0.7" text-anchor="end" transform="translate(1191.1 348.7) rotate(90)">OIII {</text>
<text class="s" font-size="9.6" fill="#ff0000" fill-opacity="1" text-anchor="end" transform="translate(1226.1 348.7) rotate(90)">CIV  {</text>
<text class="s" font-size="9.6" fill="#ffa500" fill-opacity="1" text-anchor="end" transform="translate(169.7 305.9) rotate(90)">SiIV {</text>
<text class="s" font-size="9.6" fill="#ffa500" fill-opacity="1" text-anchor="end" transform="translate(948.1 305.9) rotate(90)">CIII {</text>
<text class="s" font-size="9.6" fill="#87ceeb" fill-opacity="0.7" text-anchor="end" transform="translate(1193.2 305.9) rotate(90)">OIII {</text>
<text class="s" font-size="9.6" fill="#87ceeb" fill-opacity="0.7" text-anchor="end" transform="translate(1221.8 305.9) rotate(90)">OIII {</text>
<rect x="101.8" y="348.3" width="1197.2" height="83.8" fill="#fff"/>
<g clip-path="url(#cm)">
<polygon points="100.8,407.0 103.2,407.0 105.5,407.0 107.9,407.0 110.2,407.1 112.6,407.1 115.0,407.6 117.3,407.4 119.7,407.2 122.0,407.4 124.4,407.4 126.7,408.2 129.1,408.5 131.5,409.0 133.8,409.3 136.2,409.6 138.5,410.3 140.9,410.6 143.2,410.8 145.6,410.5 148.0,410.7 150.3,411.1 152.7,410.8 155.0,411.3 157.4,411.1 159.7,411.4 162.1,411.6 164.5,411.2 166.8,411.6 169.2,411.7 171.5,411.3 173.9,411.4 176.2,411.8 178.6,411.5 181.0,411.8 183.3,411.7 185.7,412.1 188.0,411.7 190.4,411.8 192.7,411.5 195.1,411.3 197.5,411.5 199.8,411.3 202.2,411.5 204.5,411.7 206.9,412.0 209.2,412.1 211.6,412.2 214.0,412.8 216.3,412.7 218.7,413.1 221.0,413.4 223.4,413.3 225.7,413.7 228.1,413.8 230.5,413.7 232.8,413.7 235.2,414.1 237.5,413.6 239.9,414.2 242.2,413.8 244.6,413.8 247.0,414.3 249.3,413.9 251.7,414.2 254.0,414.1 256.4,414.5 258.7,414.6 261.1,414.6 263.5,414.3 265.8,414.8 268.2,414.6 270.5,414.5 272.9,414.6 275.2,415.0 277.6,415.1 280.0,415.1 282.3,415.1 284.7,415.5 287.0,415.2 289.4,415.2 291.7,415.2 294.1,415.7 296.5,415.3 298.8,415.8 301.2,415.7 303.5,415.6 305.9,415.5 308.2,415.8 310.6,415.5 313.0,415.8 315.3,416.0 317.7,416.0 320.0,416.1 322.4,416.2 324.7,416.2 327.1,416.0 329.5,415.9 331.8,416.4 334.2,416.5 336.5,416.0 338.9,416.3 341.2,416.4 343.6,416.3 346.0,415.7 348.3,415.1 350.7,414.9 353.0,414.4 355.4,414.4 357.7,413.8 360.1,414.2 362.5,413.9 364.8,414.2 367.2,415.3 369.5,415.6 371.9,416.1 374.2,416.3 376.6,416.3 379.0,416.7 381.3,416.6 383.7,416.8 386.0,416.4 388.4,416.8 390.7,416.7 393.1,416.5 395.5,416.6 397.8,416.6 400.2,416.9 402.5,416.9 404.9,416.8 407.2,417.0 409.6,417.1 412.0,417.1 414.3,417.2 416.7,417.1 419.0,416.8 421.4,416.8 423.7,417.1 426.1,417.1 428.5,417.3 430.8,417.4 433.2,417.3 435.5,417.1 437.9,417.1 440.2,417.4 442.6,417.1 445.0,417.2 447.3,417.2 449.7,417.3 452.0,417.2 454.4,417.5 456.7,417.3 459.1,417.6 461.5,417.5 463.8,417.3 466.2,417.4 468.5,417.6 470.9,417.3 473.2,417.4 475.6,417.5 478.0,417.8 480.3,417.5 482.7,417.7 485.0,417.5 487.4,417.6 489.7,417.4 492.1,417.5 494.5,417.5 496.8,417.7 499.2,417.6 501.5,417.5 503.9,417.5 506.2,417.8 508.6,417.5 511.0,417.5 513.3,417.6 515.7,417.5 518.0,417.5 520.4,417.7 522.7,417.7 525.1,417.9 527.5,417.6 529.8,417.5 532.2,417.8 534.5,417.7 536.9,417.6 539.2,417.6 541.6,418.0 544.0,417.6 546.3,417.7 548.7,417.7 551.0,417.8 553.4,417.7 555.7,417.6 558.1,417.7 560.5,417.7 562.8,418.1 565.2,418.0 567.5,417.8 569.9,417.7 572.2,418.0 574.6,417.7 577.0,417.8 579.3,418.1 581.7,417.9 584.0,418.0 586.4,418.1 588.7,418.0 591.1,417.9 593.5,418.0 595.8,418.0 598.2,418.1 600.5,417.9 602.9,417.9 605.2,417.8 607.6,417.8 610.0,418.0 612.3,417.7 614.7,418.2 617.0,417.9 619.4,418.0 621.7,417.9 624.1,418.1 626.5,417.7 628.8,418.0 631.2,418.2 633.5,417.9 635.9,418.1 638.2,417.9 640.6,418.0 643.0,417.9 645.3,417.7 647.7,417.8 650.0,418.0 652.4,417.8 654.7,417.9 657.1,418.0 659.5,418.2 661.8,417.9 664.2,417.9 666.5,417.7 668.9,417.7 671.2,417.9 673.6,418.1 676.0,417.8 678.3,418.3 680.7,418.2 683.0,418.0 685.4,417.9 687.7,418.2 690.1,417.9 692.5,417.8 694.8,418.1 697.2,418.1 699.5,418.2 701.9,418.1 704.3,417.8 706.6,418.1 709.0,417.8 711.3,417.8 713.7,418.0 716.0,418.2 718.4,417.8 720.8,418.1 723.1,418.1 725.5,418.2 727.8,417.8 730.2,418.1 732.5,418.2 734.9,418.1 737.3,418.3 739.6,418.0 742.0,418.1 744.3,418.2 746.7,417.9 749.0,417.9 751.4,418.4 753.8,418.1 756.1,418.2 758.5,417.9 760.8,418.0 763.2,418.3 765.5,418.2 767.9,418.3 770.3,417.9 772.6,418.2 775.0,418.1 777.3,418.2 779.7,418.1 782.0,418.1 784.4,418.0 786.8,418.4 789.1,418.0 791.5,418.3 793.8,418.1 796.2,418.3 798.5,418.3 800.9,418.2 803.3,418.2 805.6,418.3 808.0,418.1 810.3,418.1 812.7,418.4 815.0,418.3 817.4,418.2 819.8,418.0 822.1,418.0 824.5,418.2 826.8,418.5 829.2,418.1 831.5,418.3 833.9,418.2 836.3,418.1 838.6,418.2 841.0,418.2 843.3,418.0 845.7,418.3 848.0,418.3 850.4,418.1 852.8,418.4 855.1,418.4 857.5,418.1 859.8,418.5 862.2,418.1 864.5,418.2 866.9,418.3 869.3,418.4 871.6,418.1 874.0,418.1 876.3,418.5 878.7,418.3 881.0,418.3 883.4,418.3 885.8,418.4 888.1,418.5 890.5,418.3 892.8,418.2 895.2,418.6 897.5,418.5 899.9,418.2 902.3,418.2 904.6,418.3 907.0,418.6 909.3,418.2 911.7,418.1 914.0,418.1 916.4,418.3 918.8,418.6 921.1,418.2 923.5,418.6 925.8,418.3 928.2,418.2 930.5,418.3 932.9,418.6 935.3,418.5 937.6,418.2 940.0,418.6 942.3,418.4 944.7,418.5 947.0,418.6 949.4,418.4 951.8,418.7 954.1,418.7 956.5,418.5 958.8,418.7 961.2,418.7 963.5,418.5 965.9,418.4 968.3,418.3 970.6,418.7 973.0,418.6 975.3,418.6 977.7,418.5 980.0,418.5 982.4,418.3 984.8,418.6 987.1,418.8 989.5,418.4 991.8,418.8 994.2,418.5 996.5,418.6 998.9,418.3 1001.3,418.5 1003.6,418.5 1006.0,418.7 1008.3,418.5 1010.7,418.7 1013.0,418.4 1015.4,418.6 1017.8,418.8 1020.1,418.7 1022.5,418.6 1024.8,418.4 1027.2,418.7 1029.5,418.4 1031.9,418.5 1034.3,418.8 1036.6,418.5 1039.0,418.8 1041.3,418.8 1043.7,418.5 1046.0,418.7 1048.4,418.4 1050.8,418.6 1053.1,418.7 1055.5,418.4 1057.8,418.8 1060.2,418.4 1062.5,418.8 1064.9,418.8 1067.3,418.3 1069.6,418.5 1072.0,418.7 1074.3,418.8 1076.7,418.3 1079.0,418.5 1081.4,418.4 1083.8,418.8 1086.1,418.5 1088.5,418.6 1090.8,418.7 1093.2,418.7 1095.5,418.5 1097.9,418.6 1100.3,418.6 1102.6,418.8 1105.0,417.1 1107.3,416.0 1109.7,417.2 1112.0,418.6 1114.4,418.4 1116.8,418.6 1119.1,418.5 1121.5,418.5 1123.8,418.5 1126.2,418.7 1128.5,418.8 1130.9,418.9 1133.3,418.8 1135.6,418.9 1138.0,418.4 1140.3,418.6 1142.7,418.5 1145.0,418.9 1147.4,418.7 1149.8,418.4 1152.1,418.6 1154.5,418.7 1156.8,418.7 1159.2,418.9 1161.5,418.9 1163.9,418.9 1166.3,418.8 1168.6,418.8 1171.0,418.5 1173.3,418.9 1175.7,418.8 1178.0,418.8 1180.4,418.9 1182.8,418.8 1185.1,418.9 1187.5,418.8 1189.8,419.0 1192.2,418.5 1194.5,418.8 1196.9,418.5 1199.3,418.7 1201.6,418.7 1204.0,418.8 1206.3,418.5 1208.7,419.0 1211.0,418.7 1213.4,418.9 1215.8,418.7 1218.1,418.7 1220.5,419.0 1222.8,419.0 1225.2,419.1 1227.5,419.0 1229.9,419.1 1232.3,418.9 1234.6,418.6 1237.0,419.0 1239.3,419.0 1241.7,418.9 1244.0,419.1 1246.4,418.8 1248.8,418.8 1251.1,419.2 1253.5,419.1 1255.8,418.9 1258.2,418.8 1260.5,419.0 1262.9,419.1 1265.3,418.8 1267.6,419.3 1270.0,419.3 1272.3,418.9 1274.7,419.2 1277.0,419.6 1279.4,419.5 1281.8,419.5 1284.1,419.9 1286.5,420.2 1288.8,420.6 1291.2,421.3 1293.6,421.5 1295.9,422.4 1298.3,422.9 1298.3,426.3 1295.9,426.8 1293.6,427.7 1291.2,427.9 1288.8,428.5 1286.5,429.0 1284.1,429.2 1281.8,429.6 1279.4,429.6 1277.0,429.5 1274.7,429.8 1272.3,430.1 1270.0,429.8 1267.6,429.7 1265.3,430.3 1262.9,430.0 1260.5,430.1 1258.2,430.3 1255.8,430.2 1253.5,430.0 1251.1,429.9 1248.8,430.2 1246.4,430.3 1244.0,430.0 1241.7,430.1 1239.3,430.1 1237.0,430.1 1234.6,430.5 1232.3,430.2 1229.9,430.0 1227.5,430.1 1225.2,430.0 1222.8,430.1 1220.5,430.1 1218.1,430.4 1215.8,430.4 1213.4,430.2 1211.0,430.4 1208.7,430.1 1206.3,430.5 1204.0,430.3 1201.6,430.4 1199.3,430.4 1196.9,430.6 1194.5,430.3 1192.2,430.6 1189.8,430.1 1187.5,430.3 1185.1,430.2 1182.8,430.2 1180.4,430.2 1178.0,430.2 1175.7,430.2 1173.3,430.2 1171.0,430.6 1168.6,430.3 1166.3,430.3 1163.9,430.2 1161.5,430.2 1159.2,430.2 1156.8,430.4 1154.5,430.4 1152.1,430.5 1149.8,430.6 1147.4,430.4 1145.0,430.2 1142.7,430.6 1140.3,430.4 1138.0,430.7 1135.6,430.2 1133.3,430.3 1130.9,430.2 1128.5,430.3 1126.2,430.4 1123.8,430.6 1121.5,430.5 1119.1,430.6 1116.8,430.5 1114.4,430.7 1112.0,430.5 1109.7,431.9 1107.3,433.0 1105.0,431.9 1102.6,430.3 1100.3,430.5 1097.9,430.4 1095.5,430.6 1093.2,430.4 1090.8,430.4 1088.5,430.4 1086.1,430.6 1083.8,430.3 1081.4,430.7 1079.0,430.6 1076.7,430.8 1074.3,430.3 1072.0,430.4 1069.6,430.6 1067.3,430.8 1064.9,430.3 1062.5,430.3 1060.2,430.6 1057.8,430.3 1055.5,430.7 1053.1,430.4 1050.8,430.5 1048.4,430.7 1046.0,430.4 1043.7,430.6 1041.3,430.3 1039.0,430.3 1036.6,430.6 1034.3,430.3 1031.9,430.6 1029.5,430.6 1027.2,430.3 1024.8,430.6 1022.5,430.4 1020.1,430.4 1017.8,430.3 1015.4,430.5 1013.0,430.7 1010.7,430.4 1008.3,430.5 1006.0,430.4 1003.6,430.6 1001.3,430.5 998.9,430.7 996.5,430.5 994.2,430.6 991.8,430.3 989.5,430.6 987.1,430.3 984.8,430.5 982.4,430.8 980.0,430.5 977.7,430.6 975.3,430.5 973.0,430.5 970.6,430.4 968.3,430.8 965.9,430.7 963.5,430.6 961.2,430.3 958.8,430.4 956.5,430.5 954.1,430.4 951.8,430.4 949.4,430.7 947.0,430.4 944.7,430.6 942.3,430.7 940.0,430.4 937.6,430.9 935.3,430.5 932.9,430.5 930.5,430.8 928.2,430.9 925.8,430.7 923.5,430.5 921.1,430.9 918.8,430.4 916.4,430.8 914.0,431.0 911.7,431.0 909.3,430.8 907.0,430.5 904.6,430.8 902.3,430.9 899.9,430.9 897.5,430.6 895.2,430.5 892.8,430.9 890.5,430.8 888.1,430.6 885.8,430.7 883.4,430.8 881.0,430.8 878.7,430.8 876.3,430.6 874.0,431.0 871.6,430.9 869.3,430.7 866.9,430.8 864.5,430.9 862.2,431.0 859.8,430.6 857.5,431.0 855.1,430.7 852.8,430.7 850.4,431.0 848.0,430.8 845.7,430.8 843.3,431.1 841.0,430.8 838.6,430.9 836.3,431.0 833.9,430.9 831.5,430.8 829.2,431.0 826.8,430.6 824.5,430.9 822.1,431.1 819.8,431.1 817.4,430.8 815.0,430.7 812.7,430.6 810.3,430.9 808.0,431.0 805.6,430.8 803.3,430.9 800.9,430.9 798.5,430.8 796.2,430.8 793.8,430.9 791.5,430.8 789.1,431.1 786.8,430.7 784.4,431.1 782.0,431.0 779.7,431.0 777.3,430.9 775.0,431.0 772.6,430.8 770.3,431.2 767.9,430.8 765.5,430.8 763.2,430.8 760.8,431.1 758.5,431.2 756.1,430.8 753.8,431.0 751.4,430.7 749.0,431.2 746.7,431.1 744.3,430.9 742.0,431.0 739.6,431.1 737.3,430.8 734.9,431.0 732.5,430.9 730.2,431.0 727.8,431.3 725.5,430.9 723.1,431.0 720.8,431.0 718.4,431.3 716.0,430.9 713.7,431.1 711.3,431.3 709.0,431.3 706.6,431.0 704.3,431.3 701.9,430.9 699.5,430.9 697.2,431.0 694.8,431.0 692.5,431.3 690.1,431.1 687.7,430.9 685.4,431.1 683.0,431.1 680.7,430.9 678.3,430.8 676.0,431.3 673.6,431.0 671.2,431.2 668.9,431.3 666.5,431.3 664.2,431.1 661.8,431.2 659.5,430.9 657.1,431.0 654.7,431.2 652.4,431.3 650.0,431.1 647.7,431.3 645.3,431.4 643.0,431.2 640.6,431.1 638.2,431.2 635.9,430.9 633.5,431.2 631.2,430.9 628.8,431.1 626.5,431.3 624.1,431.0 621.7,431.1 619.4,431.1 617.0,431.1 614.7,430.9 612.3,431.4 610.0,431.0 607.6,431.2 605.2,431.3 602.9,431.1 600.5,431.2 598.2,431.0 595.8,431.0 593.5,431.0 591.1,431.1 588.7,431.0 586.4,431.0 584.0,431.1 581.7,431.2 579.3,431.0 577.0,431.3 574.6,431.3 572.2,431.1 569.9,431.3 567.5,431.2 565.2,431.1 562.8,431.0 560.5,431.4 558.1,431.3 555.7,431.4 553.4,431.3 551.0,431.2 548.7,431.4 546.3,431.3 544.0,431.4 541.6,431.1 539.2,431.4 536.9,431.4 534.5,431.4 532.2,431.3 529.8,431.5 527.5,431.5 525.1,431.1 522.7,431.3 520.4,431.3 518.0,431.6 515.7,431.6 513.3,431.5 511.0,431.6 508.6,431.6 506.2,431.3 503.9,431.6 501.5,431.5 499.2,431.5 496.8,431.3 494.5,431.6 492.1,431.5 489.7,431.6 487.4,431.5 485.0,431.6 482.7,431.4 480.3,431.5 478.0,431.3 475.6,431.6 473.2,431.6 470.9,431.8 468.5,431.4 466.2,431.7 463.8,431.7 461.5,431.6 459.1,431.5 456.7,431.7 454.4,431.6 452.0,431.8 449.7,431.8 447.3,431.8 445.0,431.9 442.6,431.9 440.2,431.7 437.9,432.0 435.5,432.0 433.2,431.7 430.8,431.6 428.5,431.8 426.1,431.9 423.7,432.0 421.4,432.2 419.0,432.2 416.7,431.9 414.3,431.8 412.0,432.0 409.6,431.9 407.2,432.1 404.9,432.2 402.5,432.1 400.2,432.1 397.8,432.5 395.5,432.4 393.1,432.6 390.7,432.3 388.4,432.3 386.0,432.6 383.7,432.3 381.3,432.5 379.0,432.3 376.6,432.7 374.2,432.7 371.9,432.9 369.5,433.4 367.2,433.8 364.8,434.8 362.5,435.1 360.1,434.8 357.7,435.2 355.4,434.6 353.0,434.6 350.7,434.2 348.3,433.9 346.0,433.4 343.6,432.7 341.2,432.6 338.9,432.8 336.5,433.0 334.2,432.6 331.8,432.7 329.5,433.2 327.1,433.1 324.7,432.8 322.4,432.8 320.0,432.9 317.7,433.0 315.3,433.1 313.0,433.2 310.6,433.5 308.2,433.2 305.9,433.6 303.5,433.4 301.2,433.3 298.8,433.2 296.5,433.7 294.1,433.3 291.7,433.8 289.4,433.8 287.0,433.8 284.7,433.5 282.3,433.9 280.0,433.9 277.6,433.9 275.2,434.0 272.9,434.4 270.5,434.5 268.2,434.4 265.8,434.2 263.5,434.7 261.1,434.4 258.7,434.4 256.4,434.5 254.0,434.9 251.7,434.8 249.3,435.1 247.0,434.7 244.6,435.2 242.2,435.2 239.9,434.8 237.5,435.4 235.2,434.9 232.8,435.3 230.5,435.2 228.1,435.2 225.7,435.3 223.4,435.7 221.0,435.6 218.7,435.9 216.3,436.3 214.0,436.2 211.6,436.7 209.2,436.8 206.9,436.9 204.5,437.2 202.2,437.5 199.8,437.6 197.5,437.4 195.1,437.6 192.7,437.5 190.4,437.2 188.0,437.2 185.7,436.9 183.3,437.2 181.0,437.2 178.6,437.5 176.2,437.2 173.9,437.5 171.5,437.6 169.2,437.3 166.8,437.3 164.5,437.8 162.1,437.4 159.7,437.5 157.4,437.9 155.0,437.7 152.7,438.1 150.3,437.9 148.0,438.3 145.6,438.4 143.2,438.2 140.9,438.3 138.5,438.6 136.2,439.3 133.8,439.6 131.5,439.9 129.1,440.4 126.7,440.6 124.4,441.5 122.0,441.4 119.7,441.6 117.3,441.4 115.0,441.2 112.6,441.8 110.2,441.7 107.9,441.9 105.5,441.9 103.2,441.9 100.8,441.9" fill="#bbbbbb"/>
<rect x="515.4" y="348.3" width="54.4" height="83.8" fill="#bcbc00" fill-opacity="0.92"/>
<line x1="101.8" x2="1299.0" y1="424.6" y2="424.6" stroke="#4d4d4d" stroke-width="1"/>
<rect x="126.7" y="348.3" width="12.3" height="83.8" fill="#7f7f7f" fill-opacity="0.7"/>
<line x1="126.7" y1="370.2" x2="139.0" y2="360.3" stroke="#222" stroke-width="1"/>
<line x1="126.7" y1="392.8" x2="139.0" y2="382.9" stroke="#222" stroke-width="1"/>
<line x1="126.7" y1="415.4" x2="139.0" y2="405.5" stroke="#222" stroke-width="1"/>
<rect x="126.7" y="346.3" width="12.3" height="87.8" fill="none" stroke="#444" stroke-width="1.2"/>
<rect x="1259.0" y="348.3" width="6.9" height="83.8" fill="#7f7f7f" fill-opacity="0.7"/>
<line x1="1259.0" y1="357.2" x2="1265.9" y2="352.0" stroke="#222" stroke-width="1"/>
<line x1="1259.0" y1="380.7" x2="1265.9" y2="376.0" stroke="#222" stroke-width="1"/>
<line x1="1259.0" y1="404.6" x2="1265.9" y2="399.6" stroke="#222" stroke-width="1"/>
<line x1="1259.0" y1="428.2" x2="1265.9" y2="423.2" stroke="#222" stroke-width="1"/>
<rect x="1259.0" y="346.3" width="6.9" height="87.8" fill="none" stroke="#444" stroke-width="1.2"/>
<line x1="507.4" x2="507.4" y1="348.3" y2="432.1" stroke="#5a5a5a" stroke-width="1.5" stroke-dasharray="5.6 2.4"/>
<line x1="631.5" x2="631.5" y1="348.3" y2="432.1" stroke="#5a5a5a" stroke-width="1.5" stroke-dasharray="5.6 2.4"/>
<line x1="744.6" x2="744.6" y1="348.3" y2="432.1" stroke="#5a5a5a" stroke-width="1.5" stroke-dasharray="5.6 2.4"/>
<line x1="927.6" x2="927.6" y1="348.3" y2="432.1" stroke="#5a5a5a" stroke-width="1.5" stroke-dasharray="5.6 2.4"/>
<line x1="543.0" x2="543.0" y1="348.3" y2="432.1" stroke="#111" stroke-width="1" stroke-dasharray="2 1.2"/>
<polyline points="100.8,415.1 102.0,403.2 103.2,397.7 104.3,410.5 105.5,417.7 106.7,407.7 107.9,398.1 109.1,397.6 110.2,415.3 111.4,416.7 112.6,400.8 113.8,394.1 115.0,387.2 116.1,391.9 117.3,402.6 118.5,399.4 119.7,384.0 120.8,401.5 122.0,414.2 123.2,415.4 124.4,405.8 125.6,403.5 126.7,406.7 127.9,404.9 129.1,400.2 130.3,394.8 131.5,393.1 132.6,404.9 133.8,417.6 135.0,408.3 136.2,416.2 137.3,416.3 138.5,421.4 139.7,416.0 140.9,416.9 142.1,405.5 143.2,389.9 144.4,403.5 145.6,409.4 146.8,419.7 148.0,415.3 149.1,408.4 150.3,410.1 151.5,409.2 152.7,412.2 153.8,416.7 155.0,411.1 156.2,410.6 157.4,400.2 158.6,407.2 159.7,405.2 160.9,404.9 162.1,402.8 163.3,407.2 164.5,401.7 165.6,402.3 166.8,396.7 168.0,398.9 169.2,405.3 170.3,409.0 171.5,401.2 172.7,397.2 173.9,394.1 175.1,405.3 176.2,408.3 177.4,411.9 178.6,418.3 179.8,416.3 181.0,415.3 182.1,418.3 183.3,418.2 184.5,414.7 185.7,406.7 186.8,401.5 188.0,404.7 189.2,407.9 190.4,405.2 191.6,402.8 192.7,400.4 193.9,390.9 195.1,387.8 196.3,400.4 197.5,401.8 198.6,389.0 199.8,393.1 201.0,394.5 202.2,397.0 203.3,401.3 204.5,387.3 205.7,387.3 206.9,395.5 208.1,396.4 209.2,400.3 210.4,405.2 211.6,401.9 212.8,396.8 214.0,392.6 215.1,394.4 216.3,396.2 217.5,394.1 218.7,400.0 219.8,395.0 221.0,393.2 222.2,402.3 223.4,410.8 224.6,406.8 225.7,398.8 226.9,393.6 228.1,392.1 229.3,401.8 230.5,399.9 231.6,396.5 232.8,403.1 234.0,410.4 235.2,395.2 236.3,384.4 237.5,391.7 238.7,402.9 239.9,402.5 241.1,394.6 242.2,384.9 243.4,391.5 244.6,394.8 245.8,391.0 247.0,393.9 248.1,390.9 249.3,400.5 250.5,401.5 251.7,393.9 252.8,389.5 254.0,393.0 255.2,399.7 256.4,409.5 257.6,407.2 258.7,404.7 259.9,402.1 261.1,397.7 262.3,398.6 263.5,395.5 264.6,397.9 265.8,400.4 267.0,398.3 268.2,395.2 269.3,394.7 270.5,400.5 271.7,403.3 272.9,403.7 274.1,390.5 275.2,389.0 276.4,398.1 277.6,403.8 278.8,405.9 280.0,399.7 281.1,393.7 282.3,386.7 283.5,395.2 284.7,406.5 285.8,410.6 287.0,395.8 288.2,398.7 289.4,407.0 290.6,403.7 291.7,401.5 292.9,382.2 294.1,386.8 295.3,395.0 296.5,403.3 297.6,411.6 298.8,407.0 300.0,407.6 301.2,403.5 302.3,411.9 303.5,406.5 304.7,393.0 305.9,392.0 307.1,406.4 308.2,409.0 309.4,397.5 310.6,396.7 311.8,405.8 313.0,407.6 314.1,408.0 315.3,409.5 316.5,404.3 317.7,394.2 318.8,391.5 320.0,388.9 321.2,397.8 322.4,403.1 323.6,406.3 324.7,405.3 325.9,410.7 327.1,410.7 328.3,397.4 329.5,390.2 330.6,391.1 331.8,391.4 333.0,397.8 334.2,403.3 335.3,401.7 336.5,404.0 337.7,409.5 338.9,413.4 340.1,410.7 341.2,402.4 342.4,399.9 343.6,399.5 344.8,392.7 346.0,395.1 347.1,393.9 348.3,393.5 349.5,404.7 350.7,409.5 351.8,399.7 353.0,399.0 354.2,392.5 355.4,392.9 356.6,391.5 357.7,396.3 358.9,406.6 360.1,399.3 361.3,401.9 362.5,403.8 363.6,400.2 364.8,393.0 366.0,390.1 367.2,393.7 368.3,405.5 369.5,407.4 370.7,410.9 371.9,400.9 373.1,395.6 374.2,399.5 375.4,396.5 376.6,393.6 377.8,392.6 379.0,400.8 380.1,403.6 381.3,399.0 382.5,386.9 383.7,388.0 384.8,394.7 386.0,395.2 387.2,395.0 388.4,395.4 389.6,397.6 390.7,400.5 391.9,404.2 393.1,399.5 394.3,390.0 395.5,394.2 396.6,400.5 397.8,403.9 399.0,404.0 400.2,405.3 401.4,410.1 402.5,408.9 403.7,406.6 404.9,409.2 406.1,409.0 407.2,407.8 408.4,406.8 409.6,403.8 410.8,415.3 412.0,412.0 413.1,411.9 414.3,409.1 415.5,401.7 416.7,395.0 417.9,397.0 419.0,398.7 420.2,400.6 421.4,397.0 422.6,393.0 423.7,399.1 424.9,405.3 426.1,406.9 427.3,406.5 428.5,403.3 429.6,392.0 430.8,392.3 432.0,393.6 433.2,389.3 434.4,394.8 435.5,390.9 436.7,392.3 437.9,404.0 439.1,406.6 440.2,399.9 441.4,388.4 442.6,387.1 443.8,395.3 445.0,389.9 446.1,393.3 447.3,395.6 448.5,395.9 449.7,397.2 450.9,402.9 452.0,401.2 453.2,397.7 454.4,385.9 455.6,373.3 456.7,372.1 457.9,388.9 459.1,398.8 460.3,392.2 461.5,389.7 462.6,383.1 463.8,385.7 465.0,389.4 466.2,386.4 467.4,388.2 468.5,393.9 469.7,392.7 470.9,390.6 472.1,389.5 473.2,389.5 474.4,390.4 475.6,390.2 476.8,392.3 478.0,391.7 479.1,386.1 480.3,387.2 481.5,390.1 482.7,394.7 483.9,391.7 485.0,389.5 486.2,392.5 487.4,389.0 488.6,390.4 489.7,390.0 490.9,390.6 492.1,389.2 493.3,387.5 494.5,389.5 495.6,387.6 496.8,391.6 498.0,391.6 499.2,387.5 500.4,389.3 501.5,386.5 502.7,380.7 503.9,380.3 505.1,385.3 506.2,379.0 507.4,374.3 508.6,377.2 509.8,385.6 511.0,393.2 512.1,398.9 513.3,405.6 514.5,403.5 515.7,402.1 516.9,400.3 518.0,397.6 519.2,401.4 520.4,403.7 521.6,399.3 522.7,402.2 523.9,401.8 525.1,400.2 526.3,400.9 527.5,401.9 528.6,397.5 529.8,391.6 531.0,396.3 532.2,395.7 533.4,391.2 534.5,390.4 535.7,390.0 536.9,391.0 538.1,396.8 539.2,393.8 540.4,388.0 541.6,383.7 542.8,380.3 544.0,384.6 545.1,389.2 546.3,391.3 547.5,393.3 548.7,393.8 549.9,394.4 551.0,398.9 552.2,402.6 553.4,402.7 554.6,395.6 555.7,392.2 556.9,391.7 558.1,391.3 559.3,391.1 560.5,391.8 561.6,393.3 562.8,397.9 564.0,398.5 565.2,398.8 566.4,397.2 567.5,400.1 568.7,400.4 569.9,398.3 571.1,397.5 572.2,403.4 573.4,404.7 574.6,402.0 575.8,404.9 577.0,403.5 578.1,403.2 579.3,402.9 580.5,403.6 581.7,397.4 582.9,397.4 584.0,395.3 585.2,386.6 586.4,385.1 587.6,381.0 588.7,388.2 589.9,392.9 591.1,390.9 592.3,387.6 593.5,390.4 594.6,390.5 595.8,391.2 597.0,394.4 598.2,393.3 599.4,395.2 600.5,396.8 601.7,392.3 602.9,392.2 604.1,396.0 605.2,401.3 606.4,404.0 607.6,399.1 608.8,400.8 610.0,405.2 611.1,403.3 612.3,403.6 613.5,399.3 614.7,396.1 615.9,394.4 617.0,393.6 618.2,394.1 619.4,396.3 620.6,394.4 621.7,392.9 622.9,390.8 624.1,387.8 625.3,384.5 626.5,384.2 627.6,391.9 628.8,386.8 630.0,382.5 631.2,377.2 632.4,381.3 633.5,388.3 634.7,385.8 635.9,385.2 637.1,383.7 638.2,392.2 639.4,396.2 640.6,399.5 641.8,403.4 643.0,409.4 644.1,414.8 645.3,405.4 646.5,399.4 647.7,399.5 648.9,398.9 650.0,394.6 651.2,391.7 652.4,392.0 653.6,389.6 654.7,386.4 655.9,393.1 657.1,396.3 658.3,399.8 659.5,398.6 660.6,398.9 661.8,402.2 663.0,402.3 664.2,399.6 665.4,405.9 666.5,405.0 667.7,400.1 668.9,405.8 670.1,408.5 671.2,400.7 672.4,395.8 673.6,387.9 674.8,391.2 676.0,390.8 677.1,389.6 678.3,384.4 679.5,383.0 680.7,379.5 681.9,377.5 683.0,378.3 684.2,375.3 685.4,376.0 686.6,380.9 687.7,386.0 688.9,387.5 690.1,383.0 691.3,376.4 692.5,381.3 693.6,383.2 694.8,382.0 696.0,381.2 697.2,378.7 698.4,373.0 699.5,368.9 700.7,374.0 701.9,379.9 703.1,383.9 704.3,381.9 705.4,382.9 706.6,386.2 707.8,385.7 709.0,381.2 710.1,377.2 711.3,377.5 712.5,379.4 713.7,380.5 714.9,379.5 716.0,377.9 717.2,375.0 718.4,382.0 719.6,381.4 720.8,377.4 721.9,378.8 723.1,376.6 724.3,379.1 725.5,380.3 726.6,382.5 727.8,385.4 729.0,381.9 730.2,373.5 731.4,374.9 732.5,375.5 733.7,374.3 734.9,374.2 736.1,373.9 737.3,376.6 738.4,376.0 739.6,373.2 740.8,376.2 742.0,378.5 743.1,375.7 744.3,373.6 745.5,372.7 746.7,378.4 747.9,382.4 749.0,381.4 750.2,379.2 751.4,384.5 752.6,388.2 753.8,390.9 754.9,389.9 756.1,385.4 757.3,384.4 758.5,388.0 759.6,381.5 760.8,382.0 762.0,380.7 763.2,374.5 764.4,376.5 765.5,372.8 766.7,374.7 767.9,379.2 769.1,375.5 770.3,373.9 771.4,378.5 772.6,384.1 773.8,380.5 775.0,379.1 776.1,379.0 777.3,373.4 778.5,377.0 779.7,379.5 780.9,380.1 782.0,381.5 783.2,381.3 784.4,378.7 785.6,377.9 786.8,379.7 787.9,380.4 789.1,381.9 790.3,378.7 791.5,379.6 792.6,379.0 793.8,380.9 795.0,380.1 796.2,378.8 797.4,378.6 798.5,371.5 799.7,375.3 800.9,378.3 802.1,378.0 803.3,372.1 804.4,371.8 805.6,376.9 806.8,382.2 808.0,380.5 809.1,377.6 810.3,380.7 811.5,383.9 812.7,384.4 813.9,382.6 815.0,380.1 816.2,380.2 817.4,375.8 818.6,367.7 819.8,370.3 820.9,377.9 822.1,376.6 823.3,375.9 824.5,375.4 825.6,373.1 826.8,376.2 828.0,377.7 829.2,377.7 830.4,375.8 831.5,372.1 832.7,374.5 833.9,380.5 835.1,380.4 836.3,379.3 837.4,375.5 838.6,375.4 839.8,375.3 841.0,379.5 842.1,384.0 843.3,379.3 844.5,377.9 845.7,379.2 846.9,383.3 848.0,382.1 849.2,383.4 850.4,382.9 851.6,379.7 852.8,379.8 853.9,384.2 855.1,388.4 856.3,389.4 857.5,382.8 858.6,377.0 859.8,380.7 861.0,386.8 862.2,383.4 863.4,376.9 864.5,372.2 865.7,373.1 866.9,376.0 868.1,379.1 869.3,383.0 870.4,382.9 871.6,382.9 872.8,383.8 874.0,382.7 875.1,383.1 876.3,380.8 877.5,378.1 878.7,379.9 879.9,383.8 881.0,389.0 882.2,393.6 883.4,391.8 884.6,391.5 885.8,394.9 886.9,392.8 888.1,394.3 889.3,392.0 890.5,391.8 891.6,389.6 892.8,381.4 894.0,384.2 895.2,381.8 896.4,382.7 897.5,381.9 898.7,383.2 899.9,381.0 901.1,375.0 902.3,372.6 903.4,378.6 904.6,377.4 905.8,375.0 907.0,377.0 908.1,375.5 909.3,376.9 910.5,373.9 911.7,371.9 912.9,370.1 914.0,372.9 915.2,376.0 916.4,373.0 917.6,373.9 918.8,368.7 919.9,365.0 921.1,367.3 922.3,369.2 923.5,365.6 924.6,367.7 925.8,371.2 927.0,367.6 928.2,363.5 929.4,367.7 930.5,369.9 931.7,373.3 932.9,377.5 934.1,376.1 935.3,373.3 936.4,373.1 937.6,375.6 938.8,378.0 940.0,370.8 941.1,368.7 942.3,367.7 943.5,368.0 944.7,372.4 945.9,373.3 947.0,369.6 948.2,367.8 949.4,374.1 950.6,373.4 951.8,372.2 952.9,368.2 954.1,366.0 955.3,370.6 956.5,373.5 957.6,371.1 958.8,371.8 960.0,373.2 961.2,368.8 962.4,369.3 963.5,368.8 964.7,370.9 965.9,368.2 967.1,370.7 968.3,368.6 969.4,371.3 970.6,366.8 971.8,369.7 973.0,373.2 974.1,370.2 975.3,368.7 976.5,371.2 977.7,370.4 978.9,368.3 980.0,371.3 981.2,377.2 982.4,371.8 983.6,367.2 984.8,366.1 985.9,365.7 987.1,366.7 988.3,361.0 989.5,363.3 990.7,365.4 991.8,363.7 993.0,364.0 994.2,366.9 995.4,368.0 996.5,364.7 997.7,366.8 998.9,372.6 1000.1,371.0 1001.3,366.3 1002.4,365.4 1003.6,364.8 1004.8,363.9 1006.0,363.5 1007.2,361.8 1008.3,366.1 1009.5,366.7 1010.7,364.0 1011.9,362.0 1013.0,360.7 1014.2,360.3 1015.4,363.7 1016.6,361.7 1017.8,363.6 1018.9,367.4 1020.1,364.4 1021.3,358.9 1022.5,361.6 1023.7,367.9 1024.8,372.9 1026.0,370.2 1027.2,367.9 1028.4,363.7 1029.5,358.4 1030.7,361.1 1031.9,364.9 1033.1,369.0 1034.3,370.0 1035.4,367.8 1036.6,364.6 1037.8,358.5 1039.0,364.5 1040.2,366.3 1041.3,362.6 1042.5,364.7 1043.7,366.7 1044.9,362.3 1046.0,365.0 1047.2,367.4 1048.4,363.5 1049.6,362.0 1050.8,362.8 1051.9,360.5 1053.1,360.5 1054.3,365.9 1055.5,370.6 1056.7,370.2 1057.8,362.8 1059.0,356.9 1060.2,355.5 1061.4,353.9 1062.5,353.6 1063.7,357.0 1064.9,357.8 1066.1,361.6 1067.3,357.8 1068.4,357.5 1069.6,359.7 1070.8,362.0 1072.0,363.3 1073.2,359.9 1074.3,357.4 1075.5,360.4 1076.7,360.8 1077.9,362.8 1079.0,362.8 1080.2,364.0 1081.4,361.6 1082.6,361.4 1083.8,361.1 1084.9,363.4 1086.1,364.7 1087.3,361.5 1088.5,356.3 1089.7,355.1 1090.8,358.5 1092.0,357.5 1093.2,357.3 1094.4,360.3 1095.5,364.6 1096.7,362.6 1097.9,362.9 1099.1,358.8 1100.3,358.5 1101.4,362.3 1102.6,368.5 1103.8,363.0 1105.0,362.1 1106.2,365.6 1107.3,362.3 1108.5,363.4 1109.7,365.3 1110.9,367.3 1112.0,367.9 1113.2,363.5 1114.4,356.0 1115.6,360.7 1116.8,364.0 1117.9,366.4 1119.1,367.0 1120.3,367.1 1121.5,366.4 1122.7,362.9 1123.8,363.4 1125.0,363.1 1126.2,365.7 1127.4,362.7 1128.5,362.9 1129.7,362.5 1130.9,364.7 1132.1,365.6 1133.3,362.1 1134.4,364.5 1135.6,365.8 1136.8,366.6 1138.0,364.8 1139.2,364.7 1140.3,363.2 1141.5,363.2 1142.7,366.4 1143.9,367.4 1145.0,362.5 1146.2,359.6 1147.4,361.2 1148.6,364.6 1149.8,361.6 1150.9,360.6 1152.1,360.7 1153.3,360.9 1154.5,362.2 1155.7,360.6 1156.8,359.4 1158.0,363.3 1159.2,365.7 1160.4,362.6 1161.5,362.2 1162.7,366.5 1163.9,364.1 1165.1,360.4 1166.3,361.1 1167.4,362.3 1168.6,363.9 1169.8,358.6 1171.0,356.2 1172.2,361.3 1173.3,364.9 1174.5,364.8 1175.7,360.5 1176.9,361.6 1178.0,363.0 1179.2,358.8 1180.4,358.6 1181.6,361.5 1182.8,366.7 1183.9,363.8 1185.1,362.1 1186.3,364.3 1187.5,359.5 1188.7,356.4 1189.8,358.4 1191.0,363.3 1192.2,363.2 1193.4,358.6 1194.5,356.5 1195.7,355.7 1196.9,356.6 1198.1,360.3 1199.3,363.4 1200.4,365.1 1201.6,357.8 1202.8,353.7 1204.0,359.5 1205.2,360.8 1206.3,358.0 1207.5,359.1 1208.7,363.3 1209.9,363.4 1211.0,361.1 1212.2,355.3 1213.4,358.4 1214.6,355.5 1215.8,351.3 1216.9,350.7 1218.1,351.8 1219.3,354.3 1220.5,361.1 1221.7,361.6 1222.8,361.3 1224.0,357.9 1225.2,353.4 1226.4,360.5 1227.5,360.0 1228.7,361.0 1229.9,356.0 1231.1,355.7 1232.3,358.6 1233.4,355.4 1234.6,357.8 1235.8,357.4 1237.0,360.2 1238.2,363.6 1239.3,363.9 1240.5,362.6 1241.7,360.9 1242.9,359.8 1244.0,356.7 1245.2,362.2 1246.4,365.6 1247.6,366.9 1248.8,368.1 1249.9,369.7 1251.1,367.6 1252.3,363.1 1253.5,364.1 1254.7,365.1 1255.8,363.5 1257.0,361.7 1258.2,362.4 1259.4,363.8 1260.5,367.3 1261.7,368.3 1262.9,368.6 1264.1,367.5 1265.3,368.1 1266.4,367.0 1267.6,365.8 1268.8,365.5 1270.0,365.4 1271.2,364.2 1272.3,360.7 1273.5,363.8 1274.7,365.7 1275.9,363.9 1277.0,365.9 1278.2,365.7 1279.4,363.9 1280.6,369.1 1281.8,371.9 1282.9,363.5 1284.1,360.9 1285.3,367.0 1286.5,366.3 1287.7,364.2 1288.8,369.0 1290.0,368.8 1291.2,368.1 1292.4,367.4 1293.6,369.0 1294.7,363.9 1295.9,364.0 1297.1,364.5 1298.3,367.6 1299.4,371.4" fill="none" stroke="#0000ff" stroke-width="1.45" stroke-linejoin="round"/>
</g>
<rect x="101.8" y="348.3" width="1197.2" height="83.8" fill="none" stroke="#222" stroke-width="0.9"/>
<line x1="106.7" x2="106.7" y1="432.1" y2="435.5" stroke="#222" stroke-width="0.8"/>
<text class="s" x="106.70" y="445.70" font-size="9.9" text-anchor="middle" >3500</text>
<line x1="165.6" x2="165.6" y1="432.1" y2="435.5" stroke="#222" stroke-width="0.8"/>
<text class="s" x="165.63" y="445.70" font-size="9.9" text-anchor="middle" >3600</text>
<line x1="224.6" x2="224.6" y1="432.1" y2="435.5" stroke="#222" stroke-width="0.8"/>
<text class="s" x="224.56" y="445.70" font-size="9.9" text-anchor="middle" >3700</text>
<line x1="283.5" x2="283.5" y1="432.1" y2="435.5" stroke="#222" stroke-width="0.8"/>
<text class="s" x="283.49" y="445.70" font-size="9.9" text-anchor="middle" >3800</text>
<line x1="342.4" x2="342.4" y1="432.1" y2="435.5" stroke="#222" stroke-width="0.8"/>
<text class="s" x="342.42" y="445.70" font-size="9.9" text-anchor="middle" >3900</text>
<line x1="401.4" x2="401.4" y1="432.1" y2="435.5" stroke="#222" stroke-width="0.8"/>
<text class="s" x="401.35" y="445.70" font-size="9.9" text-anchor="middle" >4000</text>
<line x1="460.3" x2="460.3" y1="432.1" y2="435.5" stroke="#222" stroke-width="0.8"/>
<text class="s" x="460.28" y="445.70" font-size="9.9" text-anchor="middle" >4100</text>
<line x1="519.2" x2="519.2" y1="432.1" y2="435.5" stroke="#222" stroke-width="0.8"/>
<text class="s" x="519.21" y="445.70" font-size="9.9" text-anchor="middle" >4200</text>
<line x1="578.1" x2="578.1" y1="432.1" y2="435.5" stroke="#222" stroke-width="0.8"/>
<text class="s" x="578.14" y="445.70" font-size="9.9" text-anchor="middle" >4300</text>
<line x1="637.1" x2="637.1" y1="432.1" y2="435.5" stroke="#222" stroke-width="0.8"/>
<text class="s" x="637.07" y="445.70" font-size="9.9" text-anchor="middle" >4400</text>
<line x1="696.0" x2="696.0" y1="432.1" y2="435.5" stroke="#222" stroke-width="0.8"/>
<text class="s" x="696.00" y="445.70" font-size="9.9" text-anchor="middle" >4500</text>
<line x1="754.9" x2="754.9" y1="432.1" y2="435.5" stroke="#222" stroke-width="0.8"/>
<text class="s" x="754.93" y="445.70" font-size="9.9" text-anchor="middle" >4600</text>
<line x1="813.9" x2="813.9" y1="432.1" y2="435.5" stroke="#222" stroke-width="0.8"/>
<text class="s" x="813.86" y="445.70" font-size="9.9" text-anchor="middle" >4700</text>
<line x1="872.8" x2="872.8" y1="432.1" y2="435.5" stroke="#222" stroke-width="0.8"/>
<text class="s" x="872.79" y="445.70" font-size="9.9" text-anchor="middle" >4800</text>
<line x1="931.7" x2="931.7" y1="432.1" y2="435.5" stroke="#222" stroke-width="0.8"/>
<text class="s" x="931.72" y="445.70" font-size="9.9" text-anchor="middle" >4900</text>
<line x1="990.7" x2="990.7" y1="432.1" y2="435.5" stroke="#222" stroke-width="0.8"/>
<text class="s" x="990.65" y="445.70" font-size="9.9" text-anchor="middle" >5000</text>
<line x1="1049.6" x2="1049.6" y1="432.1" y2="435.5" stroke="#222" stroke-width="0.8"/>
<text class="s" x="1049.58" y="445.70" font-size="9.9" text-anchor="middle" >5100</text>
<line x1="1108.5" x2="1108.5" y1="432.1" y2="435.5" stroke="#222" stroke-width="0.8"/>
<text class="s" x="1108.51" y="445.70" font-size="9.9" text-anchor="middle" >5200</text>
<line x1="1167.4" x2="1167.4" y1="432.1" y2="435.5" stroke="#222" stroke-width="0.8"/>
<text class="s" x="1167.44" y="445.70" font-size="9.9" text-anchor="middle" >5300</text>
<line x1="1226.4" x2="1226.4" y1="432.1" y2="435.5" stroke="#222" stroke-width="0.8"/>
<text class="s" x="1226.37" y="445.70" font-size="9.9" text-anchor="middle" >5400</text>
<line x1="1285.3" x2="1285.3" y1="432.1" y2="435.5" stroke="#222" stroke-width="0.8"/>
<text class="s" x="1285.30" y="445.70" font-size="9.9" text-anchor="middle" >5500</text>
<line x1="98.39999999999999" x2="101.8" y1="424.6" y2="424.6" stroke="#222" stroke-width="0.8"/>
<text class="s" x="95.30" y="428.10" font-size="9.9" text-anchor="end" >0</text>
<line x1="98.39999999999999" x2="101.8" y1="397.2" y2="397.2" stroke="#222" stroke-width="0.8"/>
<text class="s" x="95.30" y="400.65" font-size="9.9" text-anchor="end" >5</text>
<line x1="98.39999999999999" x2="101.8" y1="369.7" y2="369.7" stroke="#222" stroke-width="0.8"/>
<text class="s" x="95.30" y="373.20" font-size="9.9" text-anchor="end" >10</text>
<text class="s" x="106.60" y="346.50" font-size="9.9" >e</text>
<text class="s" x="112.84" y="342.34" font-size="6.93" >−17</text>
<text class="s" x="126.56" y="346.50" font-size="9.9" >x2</text>
<text class="s" x="138.93" y="346.50" font-size="9.9" font-style="italic" >Å</text>
<rect x="480.0" y="449.6" width="17.6" height="6.3" fill="#ff0000"/>
<text class="s" x="503.60" y="455.60" font-size="8.0" fill="#333" >Lyα</text>
<rect x="533.7" y="449.6" width="17.6" height="6.3" fill="#008000"/>
<text class="s" x="557.30" y="455.60" font-size="8.0" fill="#333" >OII</text>
<rect x="586.3" y="449.6" width="17.6" height="6.3" fill="#8a2be2"/>
<text class="s" x="609.90" y="455.60" font-size="8.0" fill="#333" >CIV</text>
<rect x="640.4" y="449.6" width="17.6" height="6.3" fill="#800080"/>
<text class="s" x="664.00" y="455.60" font-size="8.0" fill="#333" >CIII</text>
<rect x="692.5" y="449.6" width="17.6" height="6.3" fill="#ff00ff"/>
<text class="s" x="716.10" y="455.60" font-size="8.0" fill="#333" >MgII</text>
<rect x="747.8" y="449.6" width="17.6" height="6.3" fill="#ffa500"/>
<text class="s" x="771.40" y="455.60" font-size="8.0" fill="#333" >HeII</text>
<rect x="802.9" y="449.6" width="17.6" height="6.3" fill="#87ceeb"/>
<text class="s" x="826.50" y="455.60" font-size="8.0" fill="#333" >(K)CaII</text>
<rect x="868.4" y="449.6" width="17.6" height="6.3" fill="#87ceeb"/>
<text class="s" x="892.00" y="455.60" font-size="8.0" fill="#333" >(H)CaII</text>
<text class="m" x="70.20" y="498.60" >HSC-DEX : Possible Matches = 0 (within +/- 3")  P(LAE)/P(OII): </text>
<text class="s" x="560.59" y="498.60" font-size="12.93" >0.066</text>
<text class="s" x="602.11" y="493.60" font-size="9.1" >0.093</text>
<text class="s" x="602.11" y="502.20" font-size="9.1" >0.05</text>
<text class="m" x="628.32" y="498.60" > (r)</text>
<text class="m" x="70.20" y="888.40" >No matching targets in catalog.</text>
<text class="m" x="70.20" y="903.20" >Row intentionally blank.</text>
<g clip-path="url(#cg1)">
<rect x="70.2" y="532.5" width="148.1" height="148" fill="#f3f3f3"/>
<ellipse cx="149.2" cy="601.6" rx="36.2" ry="59.2" transform="rotate(20 149.2 601.6)" fill="#000" fill-opacity="0.16" filter="url(#gb2)"/>
<ellipse cx="153.3" cy="588.4" rx="20.6" ry="51.0" transform="rotate(12 153.3 588.4)" fill="#000" fill-opacity="0.3" filter="url(#gb)"/>
<ellipse cx="157.4" cy="567.0" rx="15.6" ry="36.2" transform="rotate(4 157.4 567.0)" fill="#000" fill-opacity="0.55" filter="url(#gb)"/>
<ellipse cx="157.7" cy="572.0" rx="14.0" ry="26.3" transform="rotate(6 157.7 572.0)" fill="#000" fill-opacity="0.95" filter="url(#gb3)"/>
<ellipse cx="157.7" cy="571.2" rx="10.2" ry="21.4" transform="rotate(6 157.7 571.2)" fill="#000" fill-opacity="1" filter="url(#gb3)"/>
<ellipse cx="159.9" cy="537.5" rx="9.9" ry="11.5" transform="rotate(0 159.9 537.5)" fill="#000" fill-opacity="0.35" filter="url(#gb)"/>
<ellipse cx="148.4" cy="626.2" rx="13.2" ry="24.7" transform="rotate(15 148.4 626.2)" fill="#000" fill-opacity="0.08" filter="url(#gb)"/>
</g>
<circle cx="122.5" cy="554.4" r="12.25" fill="none" stroke="#666" stroke-opacity="0.9" stroke-width="0.9"/>
<circle cx="147.0" cy="558.0" r="12.25" fill="none" stroke="#666" stroke-opacity="0.9" stroke-width="0.9"/>
<circle cx="170.2" cy="560.8" r="12.25" fill="none" stroke="#666" stroke-opacity="0.9" stroke-width="0.9"/>
<circle cx="108.4" cy="572.6" r="12.25" fill="none" stroke="#666" stroke-opacity="0.9" stroke-width="0.9"/>
<circle cx="132.1" cy="576.6" r="12.25" fill="none" stroke="#666" stroke-opacity="0.9" stroke-width="0.9"/>
<circle cx="155.4" cy="579.9" r="12.25" fill="none" stroke="#666" stroke-opacity="0.9" stroke-width="0.9"/>
<circle cx="179.4" cy="583.2" r="12.25" fill="none" stroke="#666" stroke-opacity="0.9" stroke-width="0.9"/>
<circle cx="92.3" cy="591.4" r="12.25" fill="none" stroke="#666" stroke-opacity="0.9" stroke-width="0.9"/>
<circle cx="117.3" cy="595.6" r="12.25" fill="none" stroke="#666" stroke-opacity="0.9" stroke-width="0.9"/>
<circle cx="187.7" cy="605.8" r="12.25" fill="none" stroke="#666" stroke-opacity="0.9" stroke-width="0.9"/>
<circle cx="102.8" cy="614.1" r="12.25" fill="none" stroke="#666" stroke-opacity="0.9" stroke-width="0.9"/>
<circle cx="173.5" cy="624.9" r="12.25" fill="none" stroke="#666" stroke-opacity="0.9" stroke-width="0.9"/>
<circle cx="196.9" cy="627.9" r="12.25" fill="none" stroke="#666" stroke-opacity="0.9" stroke-width="0.9"/>
<circle cx="111.0" cy="637.4" r="12.25" fill="none" stroke="#666" stroke-opacity="0.9" stroke-width="0.9"/>
<circle cx="135.5" cy="640.7" r="12.25" fill="none" stroke="#666" stroke-opacity="0.9" stroke-width="0.9"/>
<circle cx="158.7" cy="643.2" r="12.25" fill="none" stroke="#666" stroke-opacity="0.9" stroke-width="0.9"/>
<circle cx="182.4" cy="647.3" r="12.25" fill="none" stroke="#666" stroke-opacity="0.9" stroke-width="0.9"/>
<circle cx="143.4" cy="663.1" r="12.25" fill="none" stroke="#666" stroke-opacity="0.9" stroke-width="0.9"/>
<circle cx="141.3" cy="598.4" r="12.3" fill="none" stroke="#0000ff" stroke-width="1.6"/>
<circle cx="163.5" cy="601.7" r="12.3" fill="none" stroke="#ff0000" stroke-width="1.6"/>
<circle cx="149.2" cy="621.6" r="12.3" fill="none" stroke="#00ff00" stroke-width="1.6"/>
<circle cx="125.5" cy="617.5" r="12.3" fill="none" stroke="#ffa500" stroke-width="1.6"/>
<rect x="94.9" y="557.2" width="98.6" height="98.6" fill="none" stroke="#ff0000" stroke-width="1.25"/>
<text class="s" x="144.25" y="546.68" font-size="11.6" text-anchor="middle" fill="#ff0000" >N</text>
<text class="s" x="79.64" y="610.60" font-size="11.6" text-anchor="middle" fill="#ff0000" >E</text>
<path d="M141.7 606.5H146.8M144.2 603.9V609.1" stroke="#ff0000" stroke-width="1" fill="none"/>
<rect x="70.2" y="532.5" width="148.1" height="148.0" fill="none" stroke="#222" stroke-width="0.9"/>
<line x1="78.5" x2="78.5" y1="680.5" y2="684.0" stroke="#222" stroke-width="0.8"/>
<line x1="66.7" x2="70.2" y1="672.3" y2="672.3" stroke="#222" stroke-width="0.8"/>
<text class="s" x="78.49" y="695.40" font-size="10.8" text-anchor="middle" >−4</text>
<text class="s" x="63.20" y="676.26" font-size="10.8" text-anchor="end" >−4</text>
<line x1="111.4" x2="111.4" y1="680.5" y2="684.0" stroke="#222" stroke-width="0.8"/>
<line x1="66.7" x2="70.2" y1="639.4" y2="639.4" stroke="#222" stroke-width="0.8"/>
<text class="s" x="111.37" y="695.40" font-size="10.8" text-anchor="middle" >−2</text>
<text class="s" x="63.20" y="643.38" font-size="10.8" text-anchor="end" >−2</text>
<line x1="144.2" x2="144.2" y1="680.5" y2="684.0" stroke="#222" stroke-width="0.8"/>
<line x1="66.7" x2="70.2" y1="606.5" y2="606.5" stroke="#222" stroke-width="0.8"/>
<text class="s" x="144.25" y="695.40" font-size="10.8" text-anchor="middle" >0</text>
<text class="s" x="63.20" y="610.50" font-size="10.8" text-anchor="end" >0</text>
<line x1="177.1" x2="177.1" y1="680.5" y2="684.0" stroke="#222" stroke-width="0.8"/>
<line x1="66.7" x2="70.2" y1="573.6" y2="573.6" stroke="#222" stroke-width="0.8"/>
<text class="s" x="177.13" y="695.40" font-size="10.8" text-anchor="middle" >2</text>
<text class="s" x="63.20" y="577.62" font-size="10.8" text-anchor="end" >2</text>
<line x1="210.0" x2="210.0" y1="680.5" y2="684.0" stroke="#222" stroke-width="0.8"/>
<line x1="66.7" x2="70.2" y1="540.7" y2="540.7" stroke="#222" stroke-width="0.8"/>
<text class="s" x="210.01" y="695.40" font-size="10.8" text-anchor="middle" >4</text>
<text class="s" x="63.20" y="544.74" font-size="10.8" text-anchor="end" >4</text>
<text class="s" x="144.25" y="526.00" font-size="13" text-anchor="middle" >Fiber Positions</text>
<text class="s" x="144.25" y="706.60" font-size="10.8" text-anchor="middle" >arcsecs</text>
<g clip-path="url(#cv)">
<g filter="url(#vb)">
<rect x="238.5" y="515.8" width="17.0" height="17.0" fill="#355f8d"/>
<rect x="255.0" y="515.8" width="17.0" height="17.0" fill="#355f8d"/>
<rect x="271.4" y="515.8" width="17.0" height="17.0" fill="#26848d"/>
<rect x="287.8" y="515.8" width="17.0" height="17.0" fill="#30b17c"/>
<rect x="304.3" y="515.8" width="17.0" height="17.0" fill="#22a884"/>
<rect x="320.7" y="515.8" width="17.0" height="17.0" fill="#9bd83c"/>
<rect x="337.2" y="515.8" width="17.0" height="17.0" fill="#229c88"/>
<rect x="353.6" y="515.8" width="17.0" height="17.0" fill="#287d8e"/>
<rect x="370.1" y="515.8" width="17.0" height="17.0" fill="#21918c"/>
<rect x="386.5" y="515.8" width="17.0" height="17.0" fill="#5fc860"/>
<rect x="402.9" y="515.8" width="17.0" height="17.0" fill="#5fc860"/>
<rect x="238.5" y="532.2" width="17.0" height="17.0" fill="#355f8d"/>
<rect x="255.0" y="532.2" width="17.0" height="17.0" fill="#355f8d"/>
<rect x="271.4" y="532.2" width="17.0" height="17.0" fill="#26848d"/>
<rect x="287.8" y="532.2" width="17.0" height="17.0" fill="#30b17c"/>
<rect x="304.3" y="532.2" width="17.0" height="17.0" fill="#22a884"/>
<rect x="320.7" y="532.2" width="17.0" height="17.0" fill="#9bd83c"/>
<rect x="337.2" y="532.2" width="17.0" height="17.0" fill="#229c88"/>
<rect x="353.6" y="532.2" width="17.0" height="17.0" fill="#287d8e"/>
<rect x="370.1" y="532.2" width="17.0" height="17.0" fill="#21918c"/>
<rect x="386.5" y="532.2" width="17.0" height="17.0" fill="#5fc860"/>
<rect x="402.9" y="532.2" width="17.0" height="17.0" fill="#5fc860"/>
<rect x="238.5" y="548.7" width="17.0" height="17.0" fill="#460f61"/>
<rect x="255.0" y="548.7" width="17.0" height="17.0" fill="#460f61"/>
<rect x="271.4" y="548.7" width="17.0" height="17.0" fill="#482475"/>
<rect x="287.8" y="548.7" width="17.0" height="17.0" fill="#26848d"/>
<rect x="304.3" y="548.7" width="17.0" height="17.0" fill="#3dba74"/>
<rect x="320.7" y="548.7" width="17.0" height="17.0" fill="#fde725"/>
<rect x="337.2" y="548.7" width="17.0" height="17.0" fill="#fde725"/>
<rect x="353.6" y="548.7" width="17.0" height="17.0" fill="#30b17c"/>
<rect x="370.1" y="548.7" width="17.0" height="17.0" fill="#26848d"/>
<rect x="386.5" y="548.7" width="17.0" height="17.0" fill="#26848d"/>
<rect x="402.9" y="548.7" width="17.0" height="17.0" fill="#26848d"/>
<rect x="238.5" y="565.1" width="17.0" height="17.0" fill="#414487"/>
<rect x="255.0" y="565.1" width="17.0" height="17.0" fill="#414487"/>
<rect x="271.4" y="565.1" width="17.0" height="17.0" fill="#26848d"/>
<rect x="287.8" y="565.1" width="17.0" height="17.0" fill="#229f87"/>
<rect x="304.3" y="565.1" width="17.0" height="17.0" fill="#229f87"/>
<rect x="320.7" y="565.1" width="17.0" height="17.0" fill="#b0dc2f"/>
<rect x="337.2" y="565.1" width="17.0" height="17.0" fill="#fde725"/>
<rect x="353.6" y="565.1" width="17.0" height="17.0" fill="#dde326"/>
<rect x="370.1" y="565.1" width="17.0" height="17.0" fill="#22a884"/>
<rect x="386.5" y="565.1" width="17.0" height="17.0" fill="#26848d"/>
<rect x="402.9" y="565.1" width="17.0" height="17.0" fill="#26848d"/>
<rect x="238.5" y="581.5" width="17.0" height="17.0" fill="#2a788e"/>
<rect x="255.0" y="581.5" width="17.0" height="17.0" fill="#2a788e"/>
<rect x="271.4" y="581.5" width="17.0" height="17.0" fill="#22a884"/>
<rect x="287.8" y="581.5" width="17.0" height="17.0" fill="#22a386"/>
<rect x="304.3" y="581.5" width="17.0" height="17.0" fill="#238c8c"/>
<rect x="320.7" y="581.5" width="17.0" height="17.0" fill="#44bf70"/>
<rect x="337.2" y="581.5" width="17.0" height="17.0" fill="#b0dc2f"/>
<rect x="353.6" y="581.5" width="17.0" height="17.0" fill="#44bf70"/>
<rect x="370.1" y="581.5" width="17.0" height="17.0" fill="#26848d"/>
<rect x="386.5" y="581.5" width="17.0" height="17.0" fill="#375a8c"/>
<rect x="402.9" y="581.5" width="17.0" height="17.0" fill="#375a8c"/>
<rect x="238.5" y="598.0" width="17.0" height="17.0" fill="#375a8c"/>
<rect x="255.0" y="598.0" width="17.0" height="17.0" fill="#375a8c"/>
<rect x="271.4" y="598.0" width="17.0" height="17.0" fill="#375a8c"/>
<rect x="287.8" y="598.0" width="17.0" height="17.0" fill="#423e83"/>
<rect x="304.3" y="598.0" width="17.0" height="17.0" fill="#287d8e"/>
<rect x="320.7" y="598.0" width="17.0" height="17.0" fill="#22a884"/>
<rect x="337.2" y="598.0" width="17.0" height="17.0" fill="#219a89"/>
<rect x="353.6" y="598.0" width="17.0" height="17.0" fill="#2a788e"/>
<rect x="370.1" y="598.0" width="17.0" height="17.0" fill="#375a8c"/>
<rect x="386.5" y="598.0" width="17.0" height="17.0" fill="#482475"/>
<rect x="402.9" y="598.0" width="17.0" height="17.0" fill="#482475"/>
<rect x="238.5" y="614.4" width="17.0" height="17.0" fill="#355f8d"/>
<rect x="255.0" y="614.4" width="17.0" height="17.0" fill="#355f8d"/>
<rect x="271.4" y="614.4" width="17.0" height="17.0" fill="#32668d"/>
<rect x="287.8" y="614.4" width="17.0" height="17.0" fill="#287d8e"/>
<rect x="304.3" y="614.4" width="17.0" height="17.0" fill="#21918c"/>
<rect x="320.7" y="614.4" width="17.0" height="17.0" fill="#248a8d"/>
<rect x="337.2" y="614.4" width="17.0" height="17.0" fill="#32668d"/>
<rect x="353.6" y="614.4" width="17.0" height="17.0" fill="#423e83"/>
<rect x="370.1" y="614.4" width="17.0" height="17.0" fill="#414487"/>
<rect x="386.5" y="614.4" width="17.0" height="17.0" fill="#355f8d"/>
<rect x="402.9" y="614.4" width="17.0" height="17.0" fill="#355f8d"/>
<rect x="238.5" y="630.9" width="17.0" height="17.0" fill="#22a386"/>
<rect x="255.0" y="630.9" width="17.0" height="17.0" fill="#22a386"/>
<rect x="271.4" y="630.9" width="17.0" height="17.0" fill="#287d8e"/>
<rect x="287.8" y="630.9" width="17.0" height="17.0" fill="#2c738e"/>
<rect x="304.3" y="630.9" width="17.0" height="17.0" fill="#2c738e"/>
<rect x="320.7" y="630.9" width="17.0" height="17.0" fill="#32668d"/>
<rect x="337.2" y="630.9" width="17.0" height="17.0" fill="#355f8d"/>
<rect x="353.6" y="630.9" width="17.0" height="17.0" fill="#39578b"/>
<rect x="370.1" y="630.9" width="17.0" height="17.0" fill="#355f8d"/>
<rect x="386.5" y="630.9" width="17.0" height="17.0" fill="#2a788e"/>
<rect x="402.9" y="630.9" width="17.0" height="17.0" fill="#2a788e"/>
<rect x="238.5" y="647.3" width="17.0" height="17.0" fill="#7ad151"/>
<rect x="255.0" y="647.3" width="17.0" height="17.0" fill="#7ad151"/>
<rect x="271.4" y="647.3" width="17.0" height="17.0" fill="#26848d"/>
<rect x="287.8" y="647.3" width="17.0" height="17.0" fill="#482475"/>
<rect x="304.3" y="647.3" width="17.0" height="17.0" fill="#482475"/>
<rect x="320.7" y="647.3" width="17.0" height="17.0" fill="#423e83"/>
<rect x="337.2" y="647.3" width="17.0" height="17.0" fill="#355f8d"/>
<rect x="353.6" y="647.3" width="17.0" height="17.0" fill="#375a8c"/>
<rect x="370.1" y="647.3" width="17.0" height="17.0" fill="#3c4f89"/>
<rect x="386.5" y="647.3" width="17.0" height="17.0" fill="#2a788e"/>
<rect x="402.9" y="647.3" width="17.0" height="17.0" fill="#2a788e"/>
<rect x="238.5" y="663.7" width="17.0" height="17.0" fill="#29ad80"/>
<rect x="255.0" y="663.7" width="17.0" height="17.0" fill="#29ad80"/>
<rect x="271.4" y="663.7" width="17.0" height="17.0" fill="#26848d"/>
<rect x="287.8" y="663.7" width="17.0" height="17.0" fill="#45085b"/>
<rect x="304.3" y="663.7" width="17.0" height="17.0" fill="#45085b"/>
<rect x="320.7" y="663.7" width="17.0" height="17.0" fill="#460f61"/>
<rect x="337.2" y="663.7" width="17.0" height="17.0" fill="#248a8d"/>
<rect x="353.6" y="663.7" width="17.0" height="17.0" fill="#482475"/>
<rect x="370.1" y="663.7" width="17.0" height="17.0" fill="#450c5e"/>
<rect x="386.5" y="663.7" width="17.0" height="17.0" fill="#414487"/>
<rect x="402.9" y="663.7" width="17.0" height="17.0" fill="#414487"/>
<rect x="238.5" y="680.2" width="17.0" height="17.0" fill="#29ad80"/>
<rect x="255.0" y="680.2" width="17.0" height="17.0" fill="#29ad80"/>
<rect x="271.4" y="680.2" width="17.0" height="17.0" fill="#26848d"/>
<rect x="287.8" y="680.2" width="17.0" height="17.0" fill="#45085b"/>
<rect x="304.3" y="680.2" width="17.0" height="17.0" fill="#45085b"/>
<rect x="320.7" y="680.2" width="17.0" height="17.0" fill="#460f61"/>
<rect x="337.2" y="680.2" width="17.0" height="17.0" fill="#248a8d"/>
<rect x="353.6" y="680.2" width="17.0" height="17.0" fill="#482475"/>
<rect x="370.1" y="680.2" width="17.0" height="17.0" fill="#450c5e"/>
<rect x="386.5" y="680.2" width="17.0" height="17.0" fill="#414487"/>
<rect x="402.9" y="680.2" width="17.0" height="17.0" fill="#414487"/>
</g>
<polygon points="313.8,547.8 321.3,543.7 336.2,536.2 342.8,537.9 356.1,552.8 369.4,576.0 347.8,594.2 340.4,593.4 329.6,576.0 325.4,561.1" fill="#a5db36" filter="url(#b2)" stroke="#a5db36" stroke-width="5" stroke-linejoin="round"/>
<polygon points="313.8,547.8 321.3,543.7 336.2,536.2 342.8,537.9 356.1,552.8 369.4,576.0 347.8,594.2 340.4,593.4 329.6,576.0 325.4,561.1" fill="#fde725" filter="url(#b1)"/>
</g>
<rect x="279.9" y="557.2" width="98.6" height="98.6" fill="none" stroke="#ff0000" stroke-width="1.25"/>
<text class="s" x="329.25" y="546.68" font-size="11.6" text-anchor="middle" fill="#ff0000" >N</text>
<text class="s" x="264.64" y="610.60" font-size="11.6" text-anchor="middle" fill="#ff0000" >E</text>
<path d="M292.3 606.5H321.0M337.5 606.5H366.2M329.2 569.5V598.3M329.2 614.7V643.5" stroke="#ff0000" stroke-width="1.4" fill="none"/>
<rect x="255.2" y="532.5" width="148.1" height="148.0" fill="none" stroke="#222" stroke-width="0.9"/>
<line x1="263.5" x2="263.5" y1="680.5" y2="684.0" stroke="#222" stroke-width="0.8"/>
<line x1="251.7" x2="255.2" y1="672.3" y2="672.3" stroke="#222" stroke-width="0.8"/>
<text class="s" x="263.49" y="695.40" font-size="10.8" text-anchor="middle" >−4</text>
<text class="s" x="248.20" y="676.26" font-size="10.8" text-anchor="end" >−4</text>
<line x1="296.4" x2="296.4" y1="680.5" y2="684.0" stroke="#222" stroke-width="0.8"/>
<line x1="251.7" x2="255.2" y1="639.4" y2="639.4" stroke="#222" stroke-width="0.8"/>
<text class="s" x="296.37" y="695.40" font-size="10.8" text-anchor="middle" >−2</text>
<text class="s" x="248.20" y="643.38" font-size="10.8" text-anchor="end" >−2</text>
<line x1="329.2" x2="329.2" y1="680.5" y2="684.0" stroke="#222" stroke-width="0.8"/>
<line x1="251.7" x2="255.2" y1="606.5" y2="606.5" stroke="#222" stroke-width="0.8"/>
<text class="s" x="329.25" y="695.40" font-size="10.8" text-anchor="middle" >0</text>
<text class="s" x="248.20" y="610.50" font-size="10.8" text-anchor="end" >0</text>
<line x1="362.1" x2="362.1" y1="680.5" y2="684.0" stroke="#222" stroke-width="0.8"/>
<line x1="251.7" x2="255.2" y1="573.6" y2="573.6" stroke="#222" stroke-width="0.8"/>
<text class="s" x="362.13" y="695.40" font-size="10.8" text-anchor="middle" >2</text>
<text class="s" x="248.20" y="577.62" font-size="10.8" text-anchor="end" >2</text>
<line x1="395.0" x2="395.0" y1="680.5" y2="684.0" stroke="#222" stroke-width="0.8"/>
<line x1="251.7" x2="255.2" y1="540.7" y2="540.7" stroke="#222" stroke-width="0.8"/>
<text class="s" x="395.01" y="695.40" font-size="10.8" text-anchor="middle" >4</text>
<text class="s" x="248.20" y="544.74" font-size="10.8" text-anchor="end" >4</text>
<text class="s" x="329.25" y="526.00" font-size="13" text-anchor="middle" >Lineflux Map</text>
<text class="s" x="329.25" y="706.60" font-size="10.8" text-anchor="middle" >s/b: 2.48 +/- 0.083</text>
<g clip-path="url(#cg3)">
<rect x="440.3" y="532.5" width="148.1" height="148" fill="#f3f3f3"/>
<ellipse cx="519.3" cy="601.6" rx="36.2" ry="59.2" transform="rotate(20 519.3 601.6)" fill="#000" fill-opacity="0.16" filter="url(#gb2)"/>
<ellipse cx="523.4" cy="588.4" rx="20.6" ry="51.0" transform="rotate(12 523.4 588.4)" fill="#000" fill-opacity="0.3" filter="url(#gb)"/>
<ellipse cx="527.5" cy="567.0" rx="15.6" ry="36.2" transform="rotate(4 527.5 567.0)" fill="#000" fill-opacity="0.55" filter="url(#gb)"/>
<ellipse cx="527.8" cy="572.0" rx="14.0" ry="26.3" transform="rotate(6 527.8 572.0)" fill="#000" fill-opacity="0.95" filter="url(#gb3)"/>
<ellipse cx="527.8" cy="571.2" rx="10.2" ry="21.4" transform="rotate(6 527.8 571.2)" fill="#000" fill-opacity="1" filter="url(#gb3)"/>
<ellipse cx="530.0" cy="537.5" rx="9.9" ry="11.5" transform="rotate(0 530.0 537.5)" fill="#000" fill-opacity="0.35" filter="url(#gb)"/>
<ellipse cx="518.5" cy="626.2" rx="13.2" ry="24.7" transform="rotate(15 518.5 626.2)" fill="#000" fill-opacity="0.08" filter="url(#gb)"/>
</g>
<g clip-path="url(#cg3)">
<ellipse cx="524.7" cy="579.5" rx="38.5" ry="84.7" transform="rotate(13.6 524.7 579.5)" fill="none" stroke="#ffd700" stroke-width="1.6"/>
</g>
<rect x="465.0" y="557.2" width="98.6" height="98.6" fill="none" stroke="#ff0000" stroke-width="1.25"/>
<text class="s" x="514.35" y="546.68" font-size="11.6" text-anchor="middle" fill="#ff0000" >N</text>
<text class="s" x="449.74" y="610.60" font-size="11.6" text-anchor="middle" fill="#ff0000" >E</text>
<path d="M477.4 606.5H506.1M522.6 606.5H551.3M514.4 569.5V598.3M514.4 614.7V643.5" stroke="#ff0000" stroke-width="1.4" fill="none"/>
<rect x="440.3" y="532.5" width="148.1" height="148.0" fill="none" stroke="#222" stroke-width="0.9"/>
<line x1="448.6" x2="448.6" y1="680.5" y2="684.0" stroke="#222" stroke-width="0.8"/>
<line x1="436.8" x2="440.3" y1="672.3" y2="672.3" stroke="#222" stroke-width="0.8"/>
<text class="s" x="448.59" y="695.40" font-size="10.8" text-anchor="middle" >−4</text>
<text class="s" x="433.30" y="676.26" font-size="10.8" text-anchor="end" >−4</text>
<line x1="481.5" x2="481.5" y1="680.5" y2="684.0" stroke="#222" stroke-width="0.8"/>
<line x1="436.8" x2="440.3" y1="639.4" y2="639.4" stroke="#222" stroke-width="0.8"/>
<text class="s" x="481.47" y="695.40" font-size="10.8" text-anchor="middle" >−2</text>
<text class="s" x="433.30" y="643.38" font-size="10.8" text-anchor="end" >−2</text>
<line x1="514.4" x2="514.4" y1="680.5" y2="684.0" stroke="#222" stroke-width="0.8"/>
<line x1="436.8" x2="440.3" y1="606.5" y2="606.5" stroke="#222" stroke-width="0.8"/>
<text class="s" x="514.35" y="695.40" font-size="10.8" text-anchor="middle" >0</text>
<text class="s" x="433.30" y="610.50" font-size="10.8" text-anchor="end" >0</text>
<line x1="547.2" x2="547.2" y1="680.5" y2="684.0" stroke="#222" stroke-width="0.8"/>
<line x1="436.8" x2="440.3" y1="573.6" y2="573.6" stroke="#222" stroke-width="0.8"/>
<text class="s" x="547.23" y="695.40" font-size="10.8" text-anchor="middle" >2</text>
<text class="s" x="433.30" y="577.62" font-size="10.8" text-anchor="end" >2</text>
<line x1="580.1" x2="580.1" y1="680.5" y2="684.0" stroke="#222" stroke-width="0.8"/>
<line x1="436.8" x2="440.3" y1="540.7" y2="540.7" stroke="#222" stroke-width="0.8"/>
<text class="s" x="580.11" y="695.40" font-size="10.8" text-anchor="middle" >4</text>
<text class="s" x="433.30" y="544.74" font-size="10.8" text-anchor="end" >4</text>
<text class="s" x="514.35" y="526.00" font-size="13" text-anchor="middle" >HSC(26.2) r</text>
<text class="s" x="514.35" y="706.60" font-size="10.8" text-anchor="middle" >m:17.5  re:3.4"  s:1.7"</text>
<text class="s" x="514.35" y="719.20" font-size="10.8" text-anchor="middle" >EWr: 0, PLAE: 0.066</text>
</svg>
</body></html>
